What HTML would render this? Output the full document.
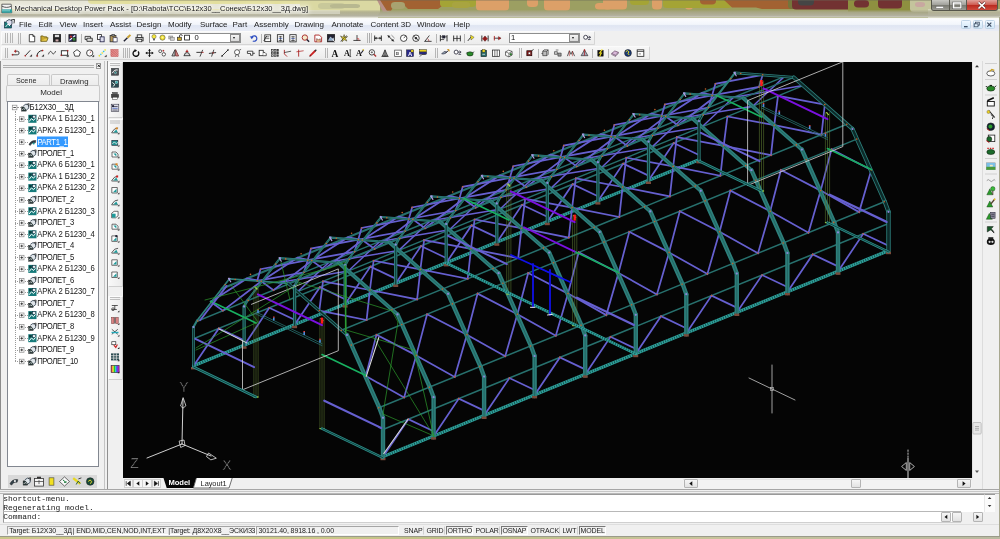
<!DOCTYPE html><html><head><meta charset="utf-8"><title>Mechanical Desktop Power Pack</title><style>
*{box-sizing:border-box;margin:0;padding:0}
html,body{width:1000px;height:539px;overflow:hidden;background:#f0f0f0}
body{position:relative;font-family:"Liberation Sans",sans-serif;font-size:8px;color:#111}
.a{position:absolute}
.t,.mi,.st,.sb,.mono{transform:translateZ(0) scaleY(1.0001)}
.t{position:absolute;white-space:nowrap;line-height:1}
#title{left:0;top:0;width:1000px;height:18px;background:#b4b48c;overflow:hidden}
#title svg{position:absolute;left:0;top:0}
#ttext{left:14.6px;top:5.2px;font-size:7.5px;color:#151515;text-shadow:0 0 2px #fff,0 0 4px #fff,0 0 6px #fff,0 0 8px #f4f4f0}
#menubar{left:1px;top:17.5px;width:998px;height:13px;background:linear-gradient(#fbfcfe,#f2f5fb 45%,#dfe5f2 55%,#e9edf6);border-top:1px solid #fafafa}
.mi{position:absolute;top:21.2px;font-size:8px;color:#1a1a1a;white-space:nowrap;line-height:1}
#tb{left:1px;top:30.5px;width:998px;height:30.5px;background:#f0f0f0}
.tbar{position:absolute;height:14px;background:linear-gradient(#f7f7f7,#ececec);border:1px solid #fbfbfb;border-right-color:#d5d5d5;border-bottom-color:#d5d5d5;border-radius:1.5px}
.grip{position:absolute;width:3px;border-left:1px solid #a8a8a8;border-right:1px solid #a8a8a8;opacity:.8}
.sep{position:absolute;width:1px;background:#b5b5b5}
.dd{position:absolute;height:10px;background:#fff;border:1px solid #8e8f8f}
.ddb{position:absolute;right:0;top:0;width:10px;height:8px;background:linear-gradient(#f4f4f4,#d9d9d9);border:1px solid #8a8a8a}
.ddb:after{content:"";position:absolute;left:2.2px;top:2.4px;border:1.8px solid transparent;border-top:2.2px solid #111}
#leftp{left:0;top:61px;width:104.5px;height:431px;background:#f0f0f0;border-left:1px solid #8c8c8c;border-right:1px solid #c4c4c4}
.tab{position:absolute;background:linear-gradient(#f4f4f4,#ebebeb);border:1px solid #c9c9c9;border-bottom:none;border-radius:2px 2px 0 0;text-align:center;font-size:8px;color:#2a2a2a}
#tree{left:7px;top:101px;width:92px;height:366px;background:#fff;border:1px solid #828790;overflow:hidden}
.ti{position:absolute;white-space:nowrap;font-size:7.7px;line-height:1;color:#151515;letter-spacing:-0.12px;transform:translateZ(0) scaleY(1.1);transform-origin:0 70%}
.ex{position:absolute;width:4.6px;height:4.6px;border:0.7px solid #777;background:#fff}
.ex:before{content:"";position:absolute;left:0.5px;right:0.5px;top:1.25px;height:0.7px;background:#222}
.ex.p:after{content:"";position:absolute;top:0.5px;bottom:0.5px;left:1.25px;width:0.7px;background:#222}
#vtb{left:107px;top:61px;width:16px;height:428px;background:#f0f0f0;border-left:1px solid #909090}
#canvas{left:123px;top:61.5px;width:849px;height:416.5px;background:#050505;overflow:hidden}
#vscroll{left:972px;top:61.5px;width:9.5px;height:416.5px;background:#f1f1f1;border-left:1px solid #e3e3e3}
#rtb{left:982px;top:61px;width:18px;height:431px;background:#f0f0f0;border-left:1px solid #dcdcdc}
#tabrow{left:123px;top:478px;width:849px;height:10.5px;background:#f0f0f0}
#cmd{left:0;top:489px;width:1000px;height:35px;background:#f0f0f0;border-top:1px solid #a6a6a6}
#cmdtxt{left:3px;top:494px;width:958px;height:17.5px;background:#fff;border-top:1px solid #9a9a9a;border-left:1px solid #9a9a9a;border-bottom:1px solid #b8b8b8}
#cmdln{left:3px;top:511.5px;width:958px;height:11px;background:#fff;border-left:1px solid #9a9a9a;border-bottom:1px solid #d0d0d0}
.mono{position:absolute;font-family:"Liberation Mono",monospace;font-size:7.95px;line-height:1;white-space:nowrap;color:#1a1a1a;left:3.2px}
#status{left:0;top:523.5px;width:1000px;height:12px;background:#f0f0f0;border-top:1px solid #dedede}
.sf{position:absolute;top:526px;height:8.6px;border:1px solid #a5a5a5;border-right-color:#fff;border-bottom-color:#fff}
.st{position:absolute;top:527.2px;font-size:7px;line-height:1;white-space:nowrap;color:#222;letter-spacing:-0.1px}
.sb{position:absolute;top:526px;height:8.8px;font-size:7px;line-height:7.4px;white-space:nowrap;color:#222;letter-spacing:-0.12px;padding:0 1px;border:1px solid transparent;border-right-color:#cfcfcf}
.sb.on{border:1px solid #777;border-right-color:#fff;border-bottom-color:#fff}
#bottomedge{left:0;top:535.5px;width:1000px;height:3.5px;background:linear-gradient(90deg,#c9c68a,#d6d08c 20%,#bdbf86 45%,#c8c49a 70%,#b9b9a0);border-top:1px solid #9a9a8a}
.sbtn{position:absolute;background:linear-gradient(#f6f6f6,#e2e2e2);border:1px solid #b4b4b4;border-radius:1px}
</style></head><body>
<div id="title" class="a"><svg width="1000" height="18" viewBox="0 0 1000 18"><defs><filter id="bl" x="-5%" y="-50%" width="110%" height="200%"><feGaussianBlur stdDeviation="0.7"/></filter><linearGradient id="fb" x1="0" y1="0" x2="0" y2="1"><stop offset="0" stop-color="#a8a888" stop-opacity="0"/><stop offset=".3" stop-color="#aaa88c" stop-opacity=".8"/><stop offset=".8" stop-color="#b4b2a0" stop-opacity="1"/><stop offset="1" stop-color="#dcdcd4" stop-opacity="1"/></linearGradient></defs><g filter="url(#bl)"><rect x="0.0" y="0.0" width="382.0" height="18.0" fill="#e6e5d6"/><rect x="378.0" y="0.0" width="622.0" height="18.0" fill="#9c9f62"/><rect x="88.0" y="-4.0" width="242.0" height="8.0" rx="4.0" ry="3.5" fill="#e2de9c"/><rect x="150.0" y="9.0" width="110.0" height="6.0" rx="4.0" ry="2.7" fill="#e6e2b0"/><rect x="10.0" y="9.0" width="60.0" height="6.0" rx="4.0" ry="2.7" fill="#e4e0a8"/><rect x="300.0" y="-3.0" width="80.0" height="18.0" rx="4.0" ry="3.5" fill="#dad8a2"/><rect x="318.0" y="3.0" width="27.0" height="6.0" rx="4.0" ry="2.7" fill="#c8c89a"/><rect x="330.0" y="4.0" width="30.0" height="4.0" rx="4.0" ry="1.8" fill="#b8b890"/><path d="M377 0h6l6 12h-6z" fill="#b89088"/><path d="M380 0h76v6h-14l-4 3h-30l-4-4h-10l-3 6h-4z" fill="#a26230"/><rect x="391.0" y="2.0" width="14.0" height="7.0" rx="4.0" ry="3.2" fill="#a8a270"/><rect x="440.0" y="-3.0" width="36.0" height="10.0" rx="4.0" ry="3.5" fill="#a4a436"/><rect x="452.0" y="2.0" width="18.0" height="6.0" rx="4.0" ry="2.7" fill="#a8a440"/><rect x="476.0" y="-4.0" width="33.0" height="14.5" rx="4.0" ry="3.5" fill="#dca068"/><rect x="527.0" y="-3.0" width="11.0" height="10.0" rx="4.0" ry="3.5" fill="#dca068"/><rect x="544.0" y="-3.0" width="26.0" height="13.5" rx="4.0" ry="3.5" fill="#dca068"/><rect x="603.0" y="-3.0" width="24.0" height="12.5" rx="4.0" ry="3.5" fill="#dca068"/><rect x="595.0" y="3.0" width="17.0" height="6.5" rx="4.0" ry="3.0" fill="#dca068"/><rect x="652.0" y="-3.0" width="10.0" height="12.5" rx="4.0" ry="3.5" fill="#dca068"/><rect x="685.0" y="1.5" width="8.0" height="8.0" rx="3.2" ry="3.5" fill="#dca068"/><rect x="630.0" y="-3.0" width="19.0" height="8.0" rx="4.0" ry="3.5" fill="#a4a436"/><rect x="663.0" y="-4.0" width="69.0" height="12.0" rx="4.0" ry="3.5" fill="#a4a436"/><rect x="700.0" y="-3.0" width="16.0" height="7.5" rx="4.0" ry="3.4" fill="#a26230"/><path d="M724 0h68v9h-30l-6-1.5h-24z" fill="#a26230"/><rect x="788.0" y="-2.0" width="12.0" height="11.0" rx="4.0" ry="3.5" fill="#74743a"/><rect x="792.0" y="-4.0" width="60.0" height="13.5" rx="4.0" ry="3.5" fill="#723232"/><rect x="798.0" y="-3.0" width="16.0" height="8.5" rx="4.0" ry="3.5" fill="#454545"/><rect x="848.0" y="0.0" width="70.0" height="12.0" fill="#8e9040"/><rect x="854.0" y="0.0" width="15.0" height="7.5" rx="4.0" ry="3.4" fill="#723232"/><rect x="878.0" y="-3.0" width="24.0" height="11.5" rx="4.0" ry="3.5" fill="#723232"/><rect x="910.0" y="-3.0" width="24.0" height="15.0" rx="4.0" ry="3.5" fill="#c4c49c"/><rect x="915.0" y="2.0" width="10.0" height="5.0" rx="4.0" ry="2.3" fill="#c8a8a0"/><rect x="928.0" y="9.0" width="72.0" height="9.0" fill="#d4d4b8"/></g><rect x="0" y="9.5" width="1000" height="8" fill="url(#fb)"/><rect x="0" y="10" width="340" height="4" fill="#e8e8dc" opacity=".55"/><rect x="0" y="0" width="1000" height="1" fill="#6a6a5a" opacity=".35"/></svg></div>
<svg class="a" style="left:1px;top:3px" width="12" height="11" viewBox="0 0 12 11"><path d="M.8 1.2h9.4l.6 8.6h-10z" fill="#f4f4f4" stroke="#333" stroke-width=".7"/><path d="M1 3.2c3 1.6 6 1.6 9.4 0" fill="none" stroke="#333" stroke-width=".8"/><rect x=".9" y="6.3" width="10" height="3.4" fill="#1a9a9a"/><path d="M2 6.5v2M4 6.5v2M6 6.5v2M8 6.5v2" stroke="#fff" stroke-width=".7"/></svg>
<div id="ttext" class="t">Mechanical Desktop Power Pack - [D:\Rabota\ТСС\Б12х30__Сонекс\Б12х30__3Д.dwg]</div>
<div class="a" style="left:931px;top:0;width:67px;height:11px;border:1px solid #55554a;border-top:none;border-radius:0 0 3px 3px;background:#888;overflow:hidden"><div class="a" style="left:0;top:0;width:17.5px;height:10px;background:linear-gradient(#c9c9c4,#a3a39e 45%,#77776f 50%,#9c9c94);border-right:1px solid #5a5a50"></div><div class="a" style="left:17.5px;top:0;width:17.5px;height:10px;background:linear-gradient(#c9c9c4,#a3a39e 45%,#77776f 50%,#9c9c94);border-right:1px solid #5a5a50"></div><div class="a" style="left:35px;top:0;width:31px;height:10px;background:linear-gradient(#e0a29a,#cf5f55 45%,#b8281e 50%,#cf4a3c)"></div></div>
<svg class="a" style="left:931px;top:0" width="67" height="11" viewBox="0 0 67 11"><rect x="5" y="6.4" width="7.5" height="2" fill="#fff" stroke="#555" stroke-width=".4"/><rect x="22.5" y="2.8" width="7.5" height="5.2" fill="none" stroke="#fff" stroke-width="1.5"/><rect x="21.7" y="2" width="9.1" height="6.8" fill="none" stroke="#555" stroke-width=".4"/><path d="M47.5 2.3l6.6 6.2M54.1 2.3l-6.6 6.2" stroke="#5a2a2a" stroke-width="2.6"/><path d="M47.5 2.3l6.6 6.2M54.1 2.3l-6.6 6.2" stroke="#fff" stroke-width="1.6"/></svg>
<div id="menubar" class="a"></div>
<svg class="a" style="left:4px;top:19px" width="12" height="10" viewBox="0 0 12 10"><rect x=".5" y="3" width="7" height="6" fill="#1a7a7a" stroke="#123" stroke-width=".6"/><path d="M2 2.5l3-2 3 1.2v3.6l-2.5 2" fill="#dde" stroke="#123" stroke-width=".7"/><path d="M7 1l3.5-.6-.5 4" fill="none" stroke="#222" stroke-width=".9"/><path d="M1.5 8l2.5-3 2 2" fill="none" stroke="#fff" stroke-width=".8"/></svg>
<div class="mi" style="left:19px">File</div>
<div class="mi" style="left:38.5px">Edit</div>
<div class="mi" style="left:59.5px">View</div>
<div class="mi" style="left:83px">Insert</div>
<div class="mi" style="left:110px">Assist</div>
<div class="mi" style="left:136.5px">Design</div>
<div class="mi" style="left:168px">Modify</div>
<div class="mi" style="left:200px">Surface</div>
<div class="mi" style="left:232.5px">Part</div>
<div class="mi" style="left:254px">Assembly</div>
<div class="mi" style="left:294.5px">Drawing</div>
<div class="mi" style="left:331.5px">Annotate</div>
<div class="mi" style="left:370.5px">Content 3D</div>
<div class="mi" style="left:417px">Window</div>
<div class="mi" style="left:453.5px">Help</div>
<div class="a" style="left:960.5px;top:19.5px;width:10.5px;height:9.5px;background:linear-gradient(#f0f8ff,#d2e8f8);border:1px solid #c0d4e6;border-radius:1.5px"></div>
<div class="a" style="left:972.5px;top:19.5px;width:10.5px;height:9.5px;background:linear-gradient(#f0f8ff,#d2e8f8);border:1px solid #c0d4e6;border-radius:1.5px"></div>
<div class="a" style="left:984.5px;top:19.5px;width:10.5px;height:9.5px;background:linear-gradient(#f0f8ff,#d2e8f8);border:1px solid #c0d4e6;border-radius:1.5px"></div>
<svg class="a" style="left:960px;top:19px" width="40" height="11" viewBox="0 0 40 11"><rect x="4" y="7" width="3.6" height="1.3" fill="#3a4a60"/><rect x="15.5" y="3.2" width="3.8" height="3" fill="none" stroke="#3a4a60" stroke-width=".8"/><rect x="14.2" y="4.8" width="3.8" height="3" fill="#e0f0fc" stroke="#3a4a60" stroke-width=".8"/><path d="M27.3 3.6l4 4M31.3 3.6l-4 4" stroke="#3a4a60" stroke-width="1.2"/></svg>
<div id="tb" class="a"></div>
<div class="tbar" style="left:1px;top:31px;width:594px"></div>
<div class="tbar" style="left:1px;top:45.5px;width:649px"></div>
<div class="grip" style="left:4.5px;top:33px;height:10px"></div>
<div class="grip" style="left:9.5px;top:33px;height:10px"></div>
<div class="grip" style="left:18px;top:33px;height:11px"></div>
<div class="grip" style="left:366.5px;top:33px;height:10px"></div>
<div class="grip" style="left:369px;top:33px;height:10px"></div>
<div class="grip" style="left:5px;top:47.5px;height:10px"></div>
<div class="grip" style="left:123px;top:47.5px;height:10px"></div>
<div class="grip" style="left:126.5px;top:47.5px;height:10px"></div>
<div class="grip" style="left:324.5px;top:47.5px;height:10px"></div>
<div class="grip" style="left:435px;top:47.5px;height:10px"></div>
<div class="grip" style="left:519px;top:47.5px;height:10px"></div>
<div class="sep" style="left:64.5px;top:34px;height:9px"></div>
<div class="sep" style="left:80.5px;top:34px;height:9px"></div>
<div class="sep" style="left:435.5px;top:34px;height:9px"></div>
<div class="sep" style="left:464px;top:34px;height:9px"></div>
<div class="sep" style="left:538px;top:48.5px;height:9px"></div>
<div class="sep" style="left:592px;top:48.5px;height:9px"></div>
<div class="sep" style="left:608px;top:48.5px;height:9px"></div>
<div class="sep" style="left:260.5px;top:34px;height:9px"></div>
<div class="dd" style="left:149px;top:33px;width:92px"><div class="ddb"></div></div>
<div class="dd" style="left:508.5px;top:33px;width:71.5px"><div class="ddb"></div></div>
<div class="t" style="left:194.5px;top:34.3px;font-size:7.6px">0</div>
<div class="t" style="left:511px;top:34.3px;font-size:7.6px">1</div>
<svg class="a" style="left:0;top:0" width="1000" height="62" viewBox="0 0 1000 62"><g transform="translate(32.0 38.2) scale(.9) translate(-32.0 -38.2)"><path transform="translate(27.5 33.7)" d="M1.5 0.5h4l2 2v6h-6z" fill="#fff" stroke="#222" stroke-width="0.9"/><path transform="translate(27.5 33.7)" d="M5.5 .5v2h2" fill="none" stroke="#222" stroke-width="0.9"/></g><g transform="translate(44.5 38.2) scale(.9) translate(-44.5 -38.2)"><path transform="translate(40.0 33.7)" d="M.5 8l1.5-4h6.5l-1.5 4z" fill="#e8c84a" stroke="#6a5a10" stroke-width="0.9"/><path transform="translate(40.0 33.7)" d="M.5 8v-6h2.5l1 1h3v1" fill="#c8a830" stroke="#6a5a10" stroke-width="0.9"/></g><g transform="translate(57.0 38.2) scale(.9) translate(-57.0 -38.2)"><rect x="53.0" y="34.2" width="8.0" height="8.0" fill="#222" stroke="#222" stroke-width="0.9"/><rect x="54.5" y="34.2" width="5.0" height="3.0" fill="#ddd" stroke="#222" stroke-width="0.5"/><rect x="55.0" y="39.2" width="4.0" height="3.0" fill="#caa" stroke="#222" stroke-width="0.5"/></g><g transform="translate(72.5 38.2) scale(.9) translate(-72.5 -38.2)"><rect x="68.5" y="34.2" width="8.0" height="7.5" fill="#2a2a6a" stroke="#222" stroke-width="0.9"/><line x1="69.0" y1="40.7" x2="75.5" y2="35.2" stroke="#fff" stroke-width="1.2"/><rect x="72.5" y="37.7" width="3.5" height="3.5" fill="#3a8a3a" stroke="#111" stroke-width="0.5"/><rect x="69.5" y="35.2" width="2.5" height="2.5" fill="#c33" stroke="#111" stroke-width="0.4"/></g><g transform="translate(88.7 38.2) scale(.9) translate(-88.7 -38.2)"><path transform="translate(84.2 33.7)" d="M.5 2.5h6v3.5h-6z" fill="#eee" stroke="#222" stroke-width="0.9"/><path transform="translate(84.2 33.7)" d="M2.5 4.5h6v3.5h-6z" fill="#ddd" stroke="#222" stroke-width="0.9"/></g><g transform="translate(101.0 38.2) scale(.9) translate(-101.0 -38.2)"><rect x="97.0" y="34.2" width="4.5" height="5.5" fill="#fff" stroke="#222" stroke-width="0.9"/><rect x="100.0" y="36.7" width="4.5" height="5.5" fill="#dde" stroke="#224" stroke-width="0.9"/></g><g transform="translate(113.7 38.2) scale(.9) translate(-113.7 -38.2)"><rect x="109.7" y="35.2" width="6.5" height="7.0" fill="#b89a58" stroke="#333" stroke-width="0.9"/><rect x="111.7" y="34.0" width="3.0" height="2.0" fill="#888" stroke="#222" stroke-width="0.6"/><rect x="113.0" y="37.7" width="4.5" height="4.6" fill="#fff" stroke="#224" stroke-width="0.7"/></g><g transform="translate(127.0 38.2) scale(.9) translate(-127.0 -38.2)"><line x1="123.5" y1="41.7" x2="127.5" y2="37.7" stroke="#223" stroke-width="1.6"/><line x1="127.5" y1="37.7" x2="130.8" y2="34.5" stroke="#c8a030" stroke-width="2.2"/></g><g transform="translate(139.5 38.2) scale(.9) translate(-139.5 -38.2)"><rect x="135.5" y="37.2" width="8.0" height="4.0" fill="#bbb" stroke="#222" stroke-width="0.9"/><rect x="137.0" y="34.5" width="5.0" height="2.8" fill="#fff" stroke="#222" stroke-width="0.9"/><rect x="137.0" y="39.7" width="5.0" height="2.5" fill="#fff" stroke="#222" stroke-width="0.7"/></g><g transform="translate(253.7 38.2) scale(.9) translate(-253.7 -38.2)"><path transform="translate(249.2 33.7)" d="M2 4.5a3 3 0 1 1 1.5 3" fill="none" stroke="#2a4ac0" stroke-width="1.3"/><path transform="translate(249.2 33.7)" d="M.5 2.5l1.8 3 2-2.6z" fill="#2a4ac0" stroke="#2a4ac0" stroke-width="0.3"/></g><g transform="translate(267.5 38.2) scale(.9) translate(-267.5 -38.2)"><rect x="264.5" y="34.5" width="6.5" height="7.5" fill="#fff" stroke="#222" stroke-width="0.9"/><line x1="266.0" y1="36.7" x2="269.5" y2="36.7" stroke="#222" stroke-width="0.7"/><line x1="266.0" y1="38.7" x2="269.5" y2="38.7" stroke="#222" stroke-width="0.7"/><line x1="263.5" y1="41.2" x2="266.5" y2="35.7" stroke="#222" stroke-width="1.1"/></g><g transform="translate(280.5 38.2) scale(.9) translate(-280.5 -38.2)"><rect x="277.0" y="34.3" width="7.0" height="8.0" fill="#fff" stroke="#222" stroke-width="0.9"/><line x1="278.5" y1="36.7" x2="282.5" y2="36.7" stroke="#222" stroke-width="0.8"/><line x1="278.5" y1="38.7" x2="282.5" y2="38.7" stroke="#24a" stroke-width="0.8"/><line x1="278.5" y1="40.7" x2="282.5" y2="40.7" stroke="#222" stroke-width="0.8"/><line x1="280.5" y1="35.7" x2="280.5" y2="41.7" stroke="#222" stroke-width="0.6"/></g><g transform="translate(293.0 38.2) scale(.9) translate(-293.0 -38.2)"><rect x="289.5" y="34.3" width="7.0" height="8.0" fill="#fff" stroke="#222" stroke-width="0.9"/><line x1="291.0" y1="36.7" x2="295.0" y2="36.7" stroke="#222" stroke-width="0.8"/><line x1="291.0" y1="38.7" x2="295.0" y2="38.7" stroke="#24a" stroke-width="0.8"/><line x1="291.0" y1="40.7" x2="295.0" y2="40.7" stroke="#222" stroke-width="0.8"/><line x1="293.0" y1="35.7" x2="293.0" y2="41.7" stroke="#222" stroke-width="0.6"/></g><g transform="translate(305.5 38.2) scale(.9) translate(-305.5 -38.2)"><circle cx="304.8" cy="37.5" r="3.0" fill="#f4e8c8" stroke="#a33" stroke-width="1.1"/><line x1="307.0" y1="39.7" x2="309.5" y2="42.2" stroke="#223" stroke-width="1.6"/></g><g transform="translate(318.0 38.2) scale(.9) translate(-318.0 -38.2)"><path transform="translate(313.5 33.7)" d="M1 1h5l2.5 2.5v5h-7.5z" fill="#fff" stroke="#a22" stroke-width="1"/><path transform="translate(313.5 33.7)" d="M3 8.5v-3.5l2 1.2 2-1v3.3" fill="#e8c090" stroke="#622" stroke-width="0.6"/></g><g transform="translate(331.0 38.2) scale(.9) translate(-331.0 -38.2)"><rect x="327.0" y="34.2" width="8.0" height="8.0" fill="#223" stroke="#222" stroke-width="0.9"/><path transform="translate(326.5 33.7)" d="M1.5 7l2.5-4 2 2.5 1.5-1.5v3z" fill="#8ac" stroke="#fff" stroke-width="0.4"/><line x1="332.5" y1="38.7" x2="335.1" y2="42.3" stroke="#fff" stroke-width="1"/></g><g transform="translate(343.7 38.2) scale(.9) translate(-343.7 -38.2)"><path transform="translate(339.2 33.7)" d="M1 2l3 1.5 1-3 .8 3 3-.8-2.3 2 1.5 3-3-1.6-2.4 2.4.6-3.2z" fill="#f0d820" stroke="#333" stroke-width="0.6"/><line x1="340.2" y1="41.7" x2="347.2" y2="35.2" stroke="#333" stroke-width="0.8"/></g><g transform="translate(357.0 38.2) scale(.9) translate(-357.0 -38.2)"><line x1="353.0" y1="40.7" x2="361.0" y2="40.7" stroke="#222" stroke-width="0.9"/><line x1="357.0" y1="34.7" x2="357.0" y2="40.7" stroke="#222" stroke-width="0.9"/><line x1="357.0" y1="38.7" x2="359.0" y2="38.7" stroke="#c33" stroke-width="0.7"/><line x1="359.0" y1="38.7" x2="359.0" y2="40.7" stroke="#c33" stroke-width="0.7"/></g><g transform="translate(378.0 38.2) scale(.9) translate(-378.0 -38.2)"><line x1="374.3" y1="35.2" x2="374.3" y2="41.2" stroke="#222" stroke-width="1"/><line x1="381.7" y1="35.2" x2="381.7" y2="41.2" stroke="#222" stroke-width="1"/><line x1="374.3" y1="38.2" x2="381.7" y2="38.2" stroke="#222" stroke-width="0.8"/><path transform="translate(373.5 33.7)" d="M.8 4.5l2-1.2v2.4z M8.2 4.5l-2-1.2v2.4z" fill="#222" stroke="#222" stroke-width="0.2"/></g><g transform="translate(391.0 38.2) scale(.9) translate(-391.0 -38.2)"><line x1="387.5" y1="35.2" x2="394.0" y2="41.7" stroke="#222" stroke-width="1"/><path transform="translate(386.5 33.7)" d="M1 1.5l2.6.6-2 2z M7.5 8l-2.6-.6 2-2z" fill="#222" stroke="#222" stroke-width="0.2"/><line x1="391.5" y1="34.7" x2="395.0" y2="38.2" stroke="#555" stroke-width="0.7"/></g><g transform="translate(403.7 38.2) scale(.9) translate(-403.7 -38.2)"><circle cx="403.7" cy="38.2" r="3.6" fill="#fff" stroke="#222" stroke-width="0.9"/><line x1="403.7" y1="38.2" x2="406.0" y2="35.7" stroke="#222" stroke-width="0.8"/></g><g transform="translate(416.0 38.2) scale(.9) translate(-416.0 -38.2)"><circle cx="416.0" cy="38.2" r="3.6" fill="#fff" stroke="#222" stroke-width="0.9"/><line x1="413.5" y1="35.9" x2="418.5" y2="40.5" stroke="#222" stroke-width="0.8"/><circle cx="416.0" cy="38.2" r="1.0" fill="#222" stroke="#222" stroke-width="0.9"/></g><g transform="translate(428.0 38.2) scale(.9) translate(-428.0 -38.2)"><path transform="translate(423.5 33.7)" d="M.5 8h8M1 8l5-6.5" fill="none" stroke="#222" stroke-width="0.9"/><path transform="translate(423.5 33.7)" d="M5.5 8a4 4 0 0 0-1.6-3.2" fill="none" stroke="#a33" stroke-width="0.8"/></g><g transform="translate(443.7 38.2) scale(.9) translate(-443.7 -38.2)"><line x1="440.0" y1="34.7" x2="440.0" y2="41.7" stroke="#222" stroke-width="1"/><line x1="447.4" y1="34.7" x2="447.4" y2="41.7" stroke="#222" stroke-width="1"/><line x1="440.0" y1="36.7" x2="447.4" y2="36.7" stroke="#222" stroke-width="0.8"/><line x1="440.0" y1="39.7" x2="444.2" y2="39.7" stroke="#222" stroke-width="0.8"/><rect x="442.2" y="35.2" width="3.0" height="3.0" fill="#223" stroke="#223" stroke-width="0.3"/></g><g transform="translate(457.0 38.2) scale(.9) translate(-457.0 -38.2)"><line x1="453.3" y1="35.2" x2="453.3" y2="41.7" stroke="#222" stroke-width="1"/><line x1="457.0" y1="35.2" x2="457.0" y2="41.7" stroke="#222" stroke-width="1"/><line x1="460.7" y1="35.2" x2="460.7" y2="41.7" stroke="#222" stroke-width="1"/><line x1="453.3" y1="38.5" x2="460.7" y2="38.5" stroke="#222" stroke-width="0.8"/></g><g transform="translate(471.0 38.2) scale(.9) translate(-471.0 -38.2)"><line x1="467.5" y1="41.2" x2="471.5" y2="36.2" stroke="#222" stroke-width="1"/><path transform="translate(466.5 33.7)" d="M4 1l4 2.5-3.5 3z" fill="#f0e020" stroke="#444" stroke-width="0.5"/></g><g transform="translate(485.0 38.2) scale(.9) translate(-485.0 -38.2)"><line x1="481.5" y1="35.2" x2="481.5" y2="41.7" stroke="#222" stroke-width="1"/><line x1="488.5" y1="35.2" x2="488.5" y2="41.7" stroke="#222" stroke-width="1"/><path transform="translate(480.5 33.7)" d="M1.5 5l3-3v6z M7.5 5l-3-3v6z" fill="#a22" stroke="#311" stroke-width="0.3"/></g><g transform="translate(497.5 38.2) scale(.9) translate(-497.5 -38.2)"><line x1="493.5" y1="38.2" x2="501.0" y2="38.2" stroke="#222" stroke-width="0.9"/><path transform="translate(493.0 33.7)" d="M8.5 4.5l-3-2v4z" fill="#a22" stroke="#511" stroke-width="0.3"/><line x1="494.0" y1="35.7" x2="494.0" y2="40.7" stroke="#a22" stroke-width="1"/></g><g transform="translate(587.0 38.2) scale(.9) translate(-587.0 -38.2)"><circle cx="585.5" cy="37.2" r="2.2" fill="#fff" stroke="#223" stroke-width="0.9"/><line x1="587.5" y1="37.2" x2="591.0" y2="37.2" stroke="#223" stroke-width="0.8"/><line x1="588.0" y1="39.7" x2="591.0" y2="39.7" stroke="#223" stroke-width="0.8"/><path transform="translate(582.5 33.7)" d="M6.5 2l2 1.5-2 1.5" fill="none" stroke="#223" stroke-width="0.7"/></g><circle cx="154" cy="36.6" r="2.1" fill="#f6e83c" stroke="#554" stroke-width=".5"/><rect x="153.1" y="38.6" width="1.8" height="1.8" fill="#555"/><circle cx="162.5" cy="37.6" r="2.6" fill="#f0e030" stroke="#554" stroke-width=".6"/><circle cx="162.5" cy="37.6" r="1" fill="#fff8a0"/><rect x="168.8" y="36" width="4" height="3" fill="#bbb" stroke="#777" stroke-width=".5"/><rect x="170.3" y="37.3" width="4" height="3" fill="#ccc" stroke="#777" stroke-width=".5"/><rect x="177.3" y="37.2" width="4.2" height="3.2" fill="#c8a830" stroke="#222" stroke-width=".6"/><path d="M179.5 37.2v-1.2a1.4 1.4 0 0 1 2.8 0" fill="none" stroke="#222" stroke-width=".8"/><rect x="184.6" y="35.2" width="4.8" height="4.8" fill="#fff" stroke="#111" stroke-width=".8"/><g transform="translate(15.5 53.0) scale(.9) translate(-15.5 -53.0)"><path transform="translate(11.0 48.5)" d="M1 6.5h5.5a2 2 0 0 0 0-4h-2" fill="none" stroke="#333" stroke-width="1"/><path transform="translate(11.0 48.5)" d="M5 1l-2.2 1.5 2.2 1.6z" fill="#a22" stroke="#a22" stroke-width="0.3"/><circle cx="12.2" cy="55.0" r="0.9" fill="#a22" stroke="#a22" stroke-width="0.2"/></g><g transform="translate(28.0 53.0) scale(.9) translate(-28.0 -53.0)"><line x1="25.0" y1="56.0" x2="30.5" y2="50.0" stroke="#222" stroke-width="1"/><path transform="translate(23.5 48.5)" d="M6.5 8.5h2.3v-2.3z" fill="#222" stroke="#222" stroke-width="0.2"/><circle cx="25.0" cy="56.0" r="0.8" fill="#a22" stroke="#a22" stroke-width="0.2"/></g><g transform="translate(40.0 53.0) scale(.9) translate(-40.0 -53.0)"><path transform="translate(35.5 48.5)" d="M1.2 8a6 6 0 0 1 6-6.2" fill="none" stroke="#222" stroke-width="1.1"/><path transform="translate(35.5 48.5)" d="M6.5 8.5h2.3v-2.3z" fill="#222" stroke="#222" stroke-width="0.2"/><circle cx="36.9" cy="56.3" r="0.9" fill="#a22" stroke="#a22" stroke-width="0.2"/><circle cx="42.9" cy="50.3" r="0.8" fill="#a22" stroke="#a22" stroke-width="0.2"/></g><g transform="translate(52.0 53.0) scale(.9) translate(-52.0 -53.0)"><path transform="translate(47.5 48.5)" d="M.5 6c1.5-4 3-4 4-1.8s2.5 1.6 4-1.8" fill="none" stroke="#222" stroke-width="0.9"/></g><g transform="translate(64.5 53.0) scale(.9) translate(-64.5 -53.0)"><rect x="61.0" y="50.5" width="7.0" height="5.0" fill="#fff" stroke="#222" stroke-width="1"/><circle cx="61.0" cy="55.5" r="0.8" fill="#a22" stroke="#a22" stroke-width="0.2"/><circle cx="68.0" cy="50.5" r="0.8" fill="#a22" stroke="#a22" stroke-width="0.2"/><path transform="translate(60.0 48.5)" d="M6.8 8.8h2.2v-2.2z" fill="#222" stroke="#222" stroke-width="0.2"/></g><g transform="translate(77.0 53.0) scale(.9) translate(-77.0 -53.0)"><path transform="translate(72.5 48.5)" d="M4.5 .8l3.8 2.8-1.4 4.4h-4.8l-1.4-4.4z" fill="#fff" stroke="#222" stroke-width="0.9"/></g><g transform="translate(90.0 53.0) scale(.9) translate(-90.0 -53.0)"><circle cx="89.7" cy="53.0" r="3.5" fill="#fff" stroke="#222" stroke-width="0.9"/><line x1="89.7" y1="53.0" x2="91.5" y2="51.3" stroke="#a22" stroke-width="0.8"/><path transform="translate(85.5 48.5)" d="M6.8 8.8h2.2v-2.2z" fill="#222" stroke="#222" stroke-width="0.2"/></g><g transform="translate(102.5 53.0) scale(.9) translate(-102.5 -53.0)"><circle cx="99.0" cy="56.1" r="0.8" fill="#e8e020" stroke="#e8e020" stroke-width="0.2"/><circle cx="100.6" cy="54.5" r="0.8" fill="#30c0e0" stroke="#30c0e0" stroke-width="0.2"/><circle cx="102.2" cy="52.9" r="0.8" fill="#e8e020" stroke="#e8e020" stroke-width="0.2"/><circle cx="103.8" cy="51.3" r="0.8" fill="#30c0e0" stroke="#30c0e0" stroke-width="0.2"/><circle cx="105.4" cy="49.7" r="0.8" fill="#e8e020" stroke="#e8e020" stroke-width="0.2"/><path transform="translate(98.0 48.5)" d="M6.8 8.8h2.2v-2.2z" fill="#222" stroke="#222" stroke-width="0.2"/></g><g transform="translate(114.5 53.0) scale(.9) translate(-114.5 -53.0)"><rect x="110.5" y="49.0" width="8.0" height="8.0" fill="#e8a0a0" stroke="#c06060" stroke-width="0.5"/><line x1="110.5" y1="54.5" x2="112.0" y2="57.0" stroke="#c04040" stroke-width="0.6"/><line x1="110.5" y1="52.5" x2="114.0" y2="57.0" stroke="#c04040" stroke-width="0.6"/><line x1="110.5" y1="50.5" x2="116.0" y2="57.0" stroke="#c04040" stroke-width="0.6"/><line x1="110.5" y1="49.0" x2="118.0" y2="57.0" stroke="#c04040" stroke-width="0.6"/><line x1="112.0" y1="49.0" x2="118.5" y2="55.5" stroke="#c04040" stroke-width="0.6"/><line x1="114.0" y1="49.0" x2="118.5" y2="53.5" stroke="#c04040" stroke-width="0.6"/><line x1="116.0" y1="49.0" x2="118.5" y2="51.5" stroke="#c04040" stroke-width="0.6"/><line x1="118.0" y1="49.0" x2="118.5" y2="49.5" stroke="#c04040" stroke-width="0.6"/></g><g transform="translate(136.0 53.0) scale(.9) translate(-136.0 -53.0)"><path transform="translate(131.5 48.5)" d="M6.8 2.8a3.2 3.2 0 1 1-3-1" fill="none" stroke="#111" stroke-width="1.5"/><path transform="translate(131.5 48.5)" d="M3 .2l2.6 1.6-2.6 1.6z" fill="#111" stroke="#111" stroke-width="0.2"/></g><g transform="translate(149.5 53.0) scale(.9) translate(-149.5 -53.0)"><line x1="149.5" y1="49.0" x2="149.5" y2="57.0" stroke="#111" stroke-width="1"/><line x1="145.5" y1="53.0" x2="153.5" y2="53.0" stroke="#111" stroke-width="1"/><path transform="translate(145.0 48.5)" d="M4.5 0l-1.5 2h3z M4.5 9l-1.5-2h3z M0 4.5l2-1.5v3z M9 4.5l-2-1.5v3z" fill="#111" stroke="#111" stroke-width="0.1"/></g><g transform="translate(162.0 53.0) scale(.9) translate(-162.0 -53.0)"><circle cx="160.0" cy="51.0" r="1.6" fill="#fff" stroke="#222" stroke-width="0.8"/><circle cx="164.0" cy="54.5" r="1.9" fill="#fff" stroke="#222" stroke-width="0.8"/><circle cx="163.5" cy="50.5" r="0.9" fill="#a22" stroke="#a22" stroke-width="0.2"/></g><g transform="translate(175.0 53.0) scale(.9) translate(-175.0 -53.0)"><path transform="translate(170.5 48.5)" d="M4.5 .8l-3.5 7h3.5z" fill="#bbb" stroke="#222" stroke-width="0.8"/><path transform="translate(170.5 48.5)" d="M5.2 .8l3.3 7h-3.3z" fill="#d88" stroke="#622" stroke-width="0.8"/></g><g transform="translate(187.0 53.0) scale(.9) translate(-187.0 -53.0)"><path transform="translate(182.5 48.5)" d="M.8 7.5h7.6M1.5 7.5a3 3.5 0 0 1 6 0" fill="#ddd" stroke="#222" stroke-width="0.9"/><path transform="translate(182.5 48.5)" d="M3 3.4l1.5-2.6 1.5 2.6z" fill="#a22" stroke="#a22" stroke-width="0.3"/></g><g transform="translate(200.0 53.0) scale(.9) translate(-200.0 -53.0)"><line x1="196.0" y1="52.3" x2="201.0" y2="52.3" stroke="#222" stroke-width="1"/><line x1="201.0" y1="52.3" x2="204.0" y2="52.3" stroke="#a22" stroke-width="1"/><line x1="203.0" y1="49.5" x2="200.0" y2="57.0" stroke="#222" stroke-width="0.9"/></g><g transform="translate(212.5 53.0) scale(.9) translate(-212.5 -53.0)"><line x1="208.5" y1="53.5" x2="216.5" y2="52.5" stroke="#222" stroke-width="1"/><line x1="214.0" y1="49.3" x2="211.5" y2="57.0" stroke="#222" stroke-width="0.9"/><line x1="212.5" y1="53.0" x2="214.0" y2="52.8" stroke="#a22" stroke-width="1.2"/></g><g transform="translate(225.0 53.0) scale(.9) translate(-225.0 -53.0)"><line x1="221.5" y1="56.5" x2="228.5" y2="49.5" stroke="#222" stroke-width="1"/><circle cx="221.7" cy="56.3" r="0.8" fill="#222" stroke="#222" stroke-width="0.2"/><circle cx="228.3" cy="49.7" r="0.8" fill="#222" stroke="#222" stroke-width="0.2"/></g><g transform="translate(237.5 53.0) scale(.9) translate(-237.5 -53.0)"><circle cx="237.0" cy="52.1" r="2.8" fill="#fff" stroke="#222" stroke-width="0.8"/><line x1="236.0" y1="55.0" x2="235.0" y2="57.3" stroke="#222" stroke-width="0.8"/><line x1="238.0" y1="55.0" x2="239.0" y2="57.3" stroke="#222" stroke-width="0.8"/><line x1="239.5" y1="49.7" x2="241.5" y2="49.0" stroke="#222" stroke-width="0.7"/></g><g transform="translate(251.0 53.0) scale(.9) translate(-251.0 -53.0)"><path transform="translate(246.5 48.5)" d="M.5 2.5h6v4.5h-2.5v-2h-3.5z" fill="#fff" stroke="#222" stroke-width="0.9"/><path transform="translate(246.5 48.5)" d="M6.5 4.8h2.3" fill="none" stroke="#222" stroke-width="0.9"/></g><g transform="translate(262.5 53.0) scale(.9) translate(-262.5 -53.0)"><rect x="258.8" y="50.0" width="4.5" height="6.0" fill="#fff" stroke="#222" stroke-width="0.9"/><path transform="translate(258.0 48.5)" d="M5.3 4h2l1.4 1.4v2.1h-3.4" fill="#fff" stroke="#222" stroke-width="0.8"/></g><g transform="translate(275.0 53.0) scale(.9) translate(-275.0 -53.0)"><rect x="271.1" y="49.1" width="1.9" height="1.9" fill="#fff" stroke="#222" stroke-width="0.7"/><rect x="271.1" y="52.1" width="1.9" height="1.9" fill="#fff" stroke="#222" stroke-width="0.7"/><rect x="271.1" y="55.1" width="1.9" height="1.9" fill="#fff" stroke="#222" stroke-width="0.7"/><rect x="274.1" y="49.1" width="1.9" height="1.9" fill="#fff" stroke="#222" stroke-width="0.7"/><rect x="274.1" y="52.1" width="1.9" height="1.9" fill="#fff" stroke="#222" stroke-width="0.7"/><rect x="274.1" y="55.1" width="1.9" height="1.9" fill="#fff" stroke="#222" stroke-width="0.7"/><rect x="277.1" y="49.1" width="1.9" height="1.9" fill="#fff" stroke="#222" stroke-width="0.7"/><rect x="277.1" y="52.1" width="1.9" height="1.9" fill="#fff" stroke="#222" stroke-width="0.7"/><rect x="277.1" y="55.1" width="1.9" height="1.9" fill="#fff" stroke="#222" stroke-width="0.7"/></g><g transform="translate(287.5 53.0) scale(.9) translate(-287.5 -53.0)"><path transform="translate(283.0 48.5)" d="M1 1v4.5l3 3" fill="none" stroke="#a22" stroke-width="1"/><line x1="284.0" y1="52.5" x2="291.5" y2="51.0" stroke="#222" stroke-width="0.8"/></g><g transform="translate(300.0 53.0) scale(.9) translate(-300.0 -53.0)"><path transform="translate(295.5 48.5)" d="M3 .8v7.7" fill="none" stroke="#a22" stroke-width="1"/><line x1="296.0" y1="51.7" x2="304.0" y2="50.5" stroke="#a22" stroke-width="0.8"/></g><g transform="translate(313.0 53.0) scale(.9) translate(-313.0 -53.0)"><line x1="309.5" y1="56.5" x2="315.5" y2="50.5" stroke="#c22" stroke-width="2"/><line x1="315.0" y1="51.0" x2="316.7" y2="49.3" stroke="#333" stroke-width="1.6"/><line x1="309.3" y1="56.9" x2="310.3" y2="55.7" stroke="#222" stroke-width="1"/></g><g transform="translate(335.0 53.0) scale(.9) translate(-335.0 -53.0)"><text x="331.1" y="57.1" font-family="Liberation Serif,serif" font-weight="700" font-size="10.5" fill="#111">A</text></g><g transform="translate(348.0 53.0) scale(.9) translate(-348.0 -53.0)"><text x="343.5" y="56.7" font-family="Liberation Serif,serif" font-weight="700" font-size="9" fill="#111">A</text><line x1="350.5" y1="49.5" x2="350.5" y2="57.0" stroke="#222" stroke-width="0.8"/><line x1="349.5" y1="49.5" x2="351.5" y2="49.5" stroke="#222" stroke-width="0.7"/><line x1="349.5" y1="57.0" x2="351.5" y2="57.0" stroke="#222" stroke-width="0.7"/></g><g transform="translate(360.0 53.0) scale(.9) translate(-360.0 -53.0)"><text x="355.5" y="56.7" font-family="Liberation Serif,serif" font-weight="700" font-size="9" fill="#111">A</text><line x1="361.0" y1="53.5" x2="364.0" y2="49.5" stroke="#223" stroke-width="1.2"/><path transform="translate(355.5 48.5)" d="M7.5 .5l1.2 1.2" fill="none" stroke="#e0c020" stroke-width="1.2"/></g><g transform="translate(372.5 53.0) scale(.9) translate(-372.5 -53.0)"><circle cx="371.8" cy="52.3" r="3.0" fill="#fff" stroke="#333" stroke-width="1"/><line x1="374.0" y1="54.5" x2="376.5" y2="57.0" stroke="#a33" stroke-width="1.5"/><line x1="370.5" y1="52.3" x2="373.0" y2="52.3" stroke="#333" stroke-width="0.7"/><line x1="371.8" y1="51.0" x2="371.8" y2="53.5" stroke="#333" stroke-width="0.7"/></g><g transform="translate(385.0 53.0) scale(.9) translate(-385.0 -53.0)"><path transform="translate(380.5 48.5)" d="M4.5 1l-3 7h6z" fill="#999" stroke="#222" stroke-width="0.8"/><line x1="385.0" y1="49.5" x2="385.0" y2="57.0" stroke="#222" stroke-width="0.6"/><line x1="381.0" y1="56.8" x2="389.0" y2="56.8" stroke="#222" stroke-width="0.8"/></g><g transform="translate(398.0 53.0) scale(.9) translate(-398.0 -53.0)"><rect x="394.3" y="49.8" width="7.4" height="7.0" fill="#fff" stroke="#444" stroke-width="0.8"/><rect x="396.0" y="52.5" width="2.5" height="2.5" fill="#bbb" stroke="#444" stroke-width="0.5"/></g><g transform="translate(410.0 53.0) scale(.9) translate(-410.0 -53.0)"><rect x="406.0" y="49.5" width="8.0" height="7.5" fill="#2a2a8a" stroke="#222" stroke-width="0.5"/><text x="407.7" y="56.1" font-family="Liberation Sans,sans-serif" font-weight="700" font-size="6.5" fill="#fff">A</text><rect x="411.0" y="49.5" width="3.0" height="2.5" fill="#e8d020" stroke="#222" stroke-width="0.4"/></g><g transform="translate(423.0 53.0) scale(.9) translate(-423.0 -53.0)"><rect x="419.0" y="49.3" width="8.0" height="2.6" fill="#e8d020" stroke="#222" stroke-width="0.5"/><rect x="419.0" y="51.9" width="8.0" height="2.4" fill="#2a2a8a" stroke="#222" stroke-width="0.5"/><path transform="translate(418.5 48.5)" d="M1 8.5l2.5-2.5h4" fill="none" stroke="#222" stroke-width="0.8"/></g><g transform="translate(445.0 53.0) scale(.9) translate(-445.0 -53.0)"><path transform="translate(440.5 48.5)" d="M.8 5.5l2.5-2.5h3l-2.5 2.5z" fill="#9ab" stroke="#223" stroke-width="0.7"/><path transform="translate(440.5 48.5)" d="M5 5l3.5-3.5" fill="none" stroke="#223" stroke-width="1"/><path transform="translate(440.5 48.5)" d="M7 .8h2v2" fill="none" stroke="#c80" stroke-width="1"/></g><g transform="translate(457.5 53.0) scale(.9) translate(-457.5 -53.0)"><circle cx="456.0" cy="52.0" r="2.2" fill="#fff" stroke="#223" stroke-width="0.9"/><line x1="458.0" y1="52.0" x2="461.5" y2="52.0" stroke="#223" stroke-width="0.8"/><line x1="458.5" y1="54.5" x2="461.5" y2="54.5" stroke="#223" stroke-width="0.8"/><path transform="translate(453.0 48.5)" d="M6.5 2l2 1.5-2 1.5" fill="none" stroke="#223" stroke-width="0.7"/></g><g transform="translate(470.0 53.0) scale(.9) translate(-470.0 -53.0)"><path transform="translate(465.5 48.5)" d="M1 5.5a3.5 2.3 0 0 0 7 0a3.5 2.3 0 0 0-7 0z" fill="#2a8a2a" stroke="#121" stroke-width="0.6"/><line x1="466.0" y1="53.5" x2="467.0" y2="52.0" stroke="#121" stroke-width="0.8"/><path transform="translate(465.5 48.5)" d="M7.5 4.5l1.3-1.5" fill="none" stroke="#121" stroke-width="0.9"/></g><g transform="translate(483.7 53.0) scale(.9) translate(-483.7 -53.0)"><rect x="480.7" y="50.0" width="6.0" height="7.0" fill="#2a6a6a" stroke="#122" stroke-width="0.7"/><rect x="482.0" y="49.1" width="3.2" height="3.0" fill="#e8d020" stroke="#222" stroke-width="0.4"/><line x1="482.2" y1="54.5" x2="485.2" y2="54.5" stroke="#fff" stroke-width="0.7"/></g><g transform="translate(496.0 53.0) scale(.9) translate(-496.0 -53.0)"><rect x="492.1" y="49.7" width="7.8" height="7.0" fill="#fff" stroke="#222" stroke-width="0.8"/><line x1="494.7" y1="49.7" x2="494.7" y2="56.7" stroke="#222" stroke-width="0.7"/><line x1="497.3" y1="49.7" x2="497.3" y2="56.7" stroke="#222" stroke-width="0.7"/></g><g transform="translate(508.7 53.0) scale(.9) translate(-508.7 -53.0)"><path transform="translate(504.2 48.5)" d="M1 3.2l3.5-1.8 3.8 1.4v4l-3.6 2-3.7-1.6z" fill="#fff" stroke="#222" stroke-width="0.7"/><path transform="translate(504.2 48.5)" d="M1 3.2l3.7 1.6 3.6-2M4.7 4.8v4" fill="none" stroke="#222" stroke-width="0.6"/><circle cx="511.0" cy="54.5" r="1.2" fill="#2a8a2a" stroke="#121" stroke-width="0.3"/></g><g transform="translate(530.0 53.0) scale(.9) translate(-530.0 -53.0)"><rect x="526.5" y="50.5" width="5.5" height="5.5" fill="#8a1a1a" stroke="#200" stroke-width="0.8"/><rect x="528.0" y="52.0" width="2.5" height="2.5" fill="#fff" stroke="#200" stroke-width="0.4"/><line x1="532.0" y1="50.5" x2="534.0" y2="49.0" stroke="#222" stroke-width="0.9"/></g><g transform="translate(545.0 53.0) scale(.9) translate(-545.0 -53.0)"><path transform="translate(540.5 48.5)" d="M2 2.5h4.5v5h-4.5z" fill="#bbb" stroke="#222" stroke-width="0.7"/><path transform="translate(540.5 48.5)" d="M2 2.5l1.5-1.5h4.5l-1.5 1.5M8 1v5l-1.5 1.5" fill="none" stroke="#222" stroke-width="0.7"/><line x1="541.0" y1="53.5" x2="542.5" y2="53.5" stroke="#222" stroke-width="0.7"/></g><g transform="translate(558.0 53.0) scale(.9) translate(-558.0 -53.0)"><path transform="translate(553.5 48.5)" d="M.6 3h3.2v3h-3.2z" fill="#ccc" stroke="#222" stroke-width="0.6"/><path transform="translate(553.5 48.5)" d="M4.4 4.6h3.6v3.4h-3.6z" fill="#999" stroke="#222" stroke-width="0.6"/><path transform="translate(553.5 48.5)" d="M2 1.2h3" fill="none" stroke="#222" stroke-width="0.6"/></g><g transform="translate(571.0 53.0) scale(.9) translate(-571.0 -53.0)"><path transform="translate(566.5 48.5)" d="M.5 8l2.2-6 1.8 4 1.6-3.5 2.4 5.5" fill="none" stroke="#222" stroke-width="0.8"/><line x1="569.2" y1="50.5" x2="569.2" y2="56.5" stroke="#a22" stroke-width="0.6"/><line x1="572.6" y1="51.0" x2="572.6" y2="56.5" stroke="#a22" stroke-width="0.6"/></g><g transform="translate(584.5 53.0) scale(.9) translate(-584.5 -53.0)"><path transform="translate(580.0 48.5)" d="M4.5 1l-3.8 6.5h7.6z" fill="#aab" stroke="#222" stroke-width="0.7"/><line x1="584.5" y1="49.5" x2="584.5" y2="56.0" stroke="#a22" stroke-width="0.8"/><path transform="translate(580.0 48.5)" d="M4.5 0l-1 1.6h2z" fill="#a22" stroke="#a22" stroke-width="0.2"/></g><g transform="translate(600.5 53.0) scale(.9) translate(-600.5 -53.0)"><rect x="597.5" y="50.0" width="6.0" height="6.5" fill="#111" stroke="#111" stroke-width="0.5"/><path transform="translate(596.0 48.5)" d="M6.5 .5l-3 4h2l-2 4" fill="none" stroke="#f0e020" stroke-width="1.2"/></g><g transform="translate(615.0 53.0) scale(.9) translate(-615.0 -53.0)"><path transform="translate(610.5 48.5)" d="M.8 5l3.5-2.8 4 1.6-3.4 3.2z" fill="#d8b8d8" stroke="#535" stroke-width="0.7"/><path transform="translate(610.5 48.5)" d="M.8 5v1.2l4.1 2v-1.2M4.9 8.2l3.4-3.2v-1.2" fill="none" stroke="#535" stroke-width="0.6"/></g><g transform="translate(628.0 53.0) scale(.9) translate(-628.0 -53.0)"><circle cx="628.0" cy="53.0" r="3.8" fill="#1a3a7a" stroke="#111" stroke-width="0.6"/><path transform="translate(623.5 48.5)" d="M2 3l2-1.2 1.5 1.5-1 2 1.5 1.5" fill="none" stroke="#e8e020" stroke-width="1.1"/></g><g transform="translate(640.5 53.0) scale(.9) translate(-640.5 -53.0)"><rect x="636.8" y="49.5" width="7.4" height="7.2" fill="#fff" stroke="#222" stroke-width="0.9"/><line x1="636.8" y1="51.3" x2="644.2" y2="51.3" stroke="#222" stroke-width="0.8"/><line x1="638.5" y1="54.0" x2="641.0" y2="54.0" stroke="#222" stroke-width="0.6"/></g></svg>
<div id="leftp" class="a"></div>
<div class="a" style="left:3px;top:64.8px;width:91px;height:1px;background:#b0b0b0"></div>
<div class="a" style="left:3px;top:66.8px;width:91px;height:1px;background:#b0b0b0"></div>
<div class="a" style="left:96px;top:63.3px;width:5.4px;height:5.4px;border:1px solid #999;background:#f4f4f4"></div>
<svg class="a" style="left:96px;top:63.3px" width="6" height="6" viewBox="0 0 6 6"><path d="M1.7 1.7l2.2 2.2M3.9 1.7l-2.2 2.2" stroke="#111" stroke-width=".9"/></svg>
<div class="tab" style="left:7px;top:74px;width:42.5px;height:11.5px"></div>
<div class="tab" style="left:50.5px;top:74px;width:48px;height:11.5px"></div>
<div class="tab" style="left:5.5px;top:85.2px;width:94.5px;height:16.5px;background:#f2f2f2;border-bottom:none"></div>
<div class="t" style="left:15.9px;top:77.2px;font-size:7.25px;color:#2a2a2a">Scene</div>
<div class="t" style="left:59.9px;top:77.5px;font-size:7.8px;color:#2a2a2a">Drawing</div>
<div class="t" style="left:40.2px;top:89.4px;font-size:8px;color:#2a2a2a">Model</div>
<div id="tree" class="a"></div>
<div class="a" style="left:14.8px;top:110.5px;width:0;height:250.99px;border-left:1px dotted #9a9a9a"></div>
<div class="a" style="left:17px;top:107.3px;width:4px;height:0;border-top:1px dotted #9a9a9a"></div>
<div class="ti" style="left:29.6px;top:103.6px">Б12Х30__3Д</div>
<div class="a" style="left:15px;top:118.8px;width:13px;height:0;border-top:1px dotted #9a9a9a"></div>
<div class="ti" style="left:37.2px;top:115.1px">АРКА 1 Б1230_1</div>
<div class="a" style="left:15px;top:130.4px;width:13px;height:0;border-top:1px dotted #9a9a9a"></div>
<div class="ti" style="left:37.2px;top:126.7px">АРКА 2 Б1230_1</div>
<div class="a" style="left:15px;top:141.9px;width:13px;height:0;border-top:1px dotted #9a9a9a"></div>
<div class="ti" style="left:36.9px;top:138.2px;background:#3399ff;color:#fff;padding:1.5px .3px 1.1px .5px;margin-top:-1.5px;letter-spacing:-0.38px">PART1_1</div>
<div class="a" style="left:15px;top:153.5px;width:13px;height:0;border-top:1px dotted #9a9a9a"></div>
<div class="ti" style="left:37.2px;top:149.8px;letter-spacing:-0.4px">ПРОЛЕТ_1</div>
<div class="a" style="left:15px;top:165.0px;width:13px;height:0;border-top:1px dotted #9a9a9a"></div>
<div class="ti" style="left:37.2px;top:161.3px">АРКА 6 Б1230_1</div>
<div class="a" style="left:15px;top:176.6px;width:13px;height:0;border-top:1px dotted #9a9a9a"></div>
<div class="ti" style="left:37.2px;top:172.9px">АРКА 1 Б1230_2</div>
<div class="a" style="left:15px;top:188.1px;width:13px;height:0;border-top:1px dotted #9a9a9a"></div>
<div class="ti" style="left:37.2px;top:184.4px">АРКА 2 Б1230_2</div>
<div class="a" style="left:15px;top:199.7px;width:13px;height:0;border-top:1px dotted #9a9a9a"></div>
<div class="ti" style="left:37.2px;top:196.0px;letter-spacing:-0.4px">ПРОЛЕТ_2</div>
<div class="a" style="left:15px;top:211.2px;width:13px;height:0;border-top:1px dotted #9a9a9a"></div>
<div class="ti" style="left:37.2px;top:207.5px">АРКА 2 Б1230_3</div>
<div class="a" style="left:15px;top:222.8px;width:13px;height:0;border-top:1px dotted #9a9a9a"></div>
<div class="ti" style="left:37.2px;top:219.0px;letter-spacing:-0.4px">ПРОЛЕТ_3</div>
<div class="a" style="left:15px;top:234.3px;width:13px;height:0;border-top:1px dotted #9a9a9a"></div>
<div class="ti" style="left:37.2px;top:230.6px">АРКА 2 Б1230_4</div>
<div class="a" style="left:15px;top:245.8px;width:13px;height:0;border-top:1px dotted #9a9a9a"></div>
<div class="ti" style="left:37.2px;top:242.1px;letter-spacing:-0.4px">ПРОЛЕТ_4</div>
<div class="a" style="left:15px;top:257.4px;width:13px;height:0;border-top:1px dotted #9a9a9a"></div>
<div class="ti" style="left:37.2px;top:253.7px;letter-spacing:-0.4px">ПРОЛЕТ_5</div>
<div class="a" style="left:15px;top:268.9px;width:13px;height:0;border-top:1px dotted #9a9a9a"></div>
<div class="ti" style="left:37.2px;top:265.2px">АРКА 2 Б1230_6</div>
<div class="a" style="left:15px;top:280.5px;width:13px;height:0;border-top:1px dotted #9a9a9a"></div>
<div class="ti" style="left:37.2px;top:276.8px;letter-spacing:-0.4px">ПРОЛЕТ_6</div>
<div class="a" style="left:15px;top:292.0px;width:13px;height:0;border-top:1px dotted #9a9a9a"></div>
<div class="ti" style="left:37.2px;top:288.3px">АРКА 2 Б1230_7</div>
<div class="a" style="left:15px;top:303.6px;width:13px;height:0;border-top:1px dotted #9a9a9a"></div>
<div class="ti" style="left:37.2px;top:299.9px;letter-spacing:-0.4px">ПРОЛЕТ_7</div>
<div class="a" style="left:15px;top:315.1px;width:13px;height:0;border-top:1px dotted #9a9a9a"></div>
<div class="ti" style="left:37.2px;top:311.4px">АРКА 2 Б1230_8</div>
<div class="a" style="left:15px;top:326.7px;width:13px;height:0;border-top:1px dotted #9a9a9a"></div>
<div class="ti" style="left:37.2px;top:323.0px;letter-spacing:-0.4px">ПРОЛЕТ_8</div>
<div class="a" style="left:15px;top:338.2px;width:13px;height:0;border-top:1px dotted #9a9a9a"></div>
<div class="ti" style="left:37.2px;top:334.5px">АРКА 2 Б1230_9</div>
<div class="a" style="left:15px;top:349.7px;width:13px;height:0;border-top:1px dotted #9a9a9a"></div>
<div class="ti" style="left:37.2px;top:346.0px;letter-spacing:-0.4px">ПРОЛЕТ_9</div>
<div class="a" style="left:15px;top:361.3px;width:13px;height:0;border-top:1px dotted #9a9a9a"></div>
<div class="ti" style="left:37.2px;top:357.6px;letter-spacing:-0.4px">ПРОЛЕТ_10</div>
<svg class="a" style="left:0;top:0" width="106" height="492" viewBox="0 0 106 492"><rect x="12.30" y="105.20" width="4.6" height="4.6" fill="#fff" stroke="#8a8a8a" stroke-width=".7"/><path d="M13.30 107.50 h2.6" stroke="#222" stroke-width=".8"/><rect x="21.6" y="106.9" width="4.6" height="4.2" fill="#2a3a3a" stroke="#111" stroke-width=".4"/><path d="M23.3 105.9 l2.6 -1.8 l2.8 1 v3.2 l-2.2 1.6" fill="#dfe5ea" stroke="#123" stroke-width=".7"/><path d="M26.7 104.3 l2.4 -.6 l-.4 3" fill="none" stroke="#222" stroke-width=".8"/><path d="M22.1 110.1 l1.6 -1.6 l1.4 1.2" fill="none" stroke="#fff" stroke-width=".7"/><rect x="19.40" y="116.75" width="4.6" height="4.6" fill="#fff" stroke="#8a8a8a" stroke-width=".7"/><path d="M20.40 119.05 h2.6" stroke="#222" stroke-width=".8"/><path d="M21.70 117.75 v2.6" stroke="#222" stroke-width=".8"/><rect x="28.3" y="114.8" width="8.2" height="8" fill="#157a7a"/><path d="M29.1 121.6 l2.4 -3 l2 1.8 l2.2 -2.6" stroke="#fff" stroke-width="1" fill="none"/><rect x="32.7" y="115.4" width="3" height="2.6" fill="#e8eef2" stroke="#123" stroke-width=".5"/><rect x="29.1" y="115.6" width="2.6" height="2.4" fill="#0d3d3d"/><rect x="19.40" y="128.29" width="4.6" height="4.6" fill="#fff" stroke="#8a8a8a" stroke-width=".7"/><path d="M20.40 130.59 h2.6" stroke="#222" stroke-width=".8"/><path d="M21.70 129.29 v2.6" stroke="#222" stroke-width=".8"/><rect x="28.3" y="126.4" width="8.2" height="8" fill="#157a7a"/><path d="M29.1 133.2 l2.4 -3 l2 1.8 l2.2 -2.6" stroke="#fff" stroke-width="1" fill="none"/><rect x="32.7" y="127.0" width="3" height="2.6" fill="#e8eef2" stroke="#123" stroke-width=".5"/><rect x="29.1" y="127.2" width="2.6" height="2.4" fill="#0d3d3d"/><rect x="19.40" y="139.83" width="4.6" height="4.6" fill="#fff" stroke="#8a8a8a" stroke-width=".7"/><path d="M20.40 142.13 h2.6" stroke="#222" stroke-width=".8"/><path d="M21.70 140.83 v2.6" stroke="#222" stroke-width=".8"/><path d="M28.9 144.5 c1.5 -3 4 -4.5 7 -4 l-.6 2.4 c-2.5 -.4 -4 .6 -5 2.6 z" fill="#2a3a44" stroke="#111" stroke-width=".4"/><circle cx="33.7" cy="143.5" r="1" fill="#1a9a9a"/><rect x="19.40" y="151.38" width="4.6" height="4.6" fill="#fff" stroke="#8a8a8a" stroke-width=".7"/><path d="M20.40 153.68 h2.6" stroke="#222" stroke-width=".8"/><path d="M21.70 152.38 v2.6" stroke="#222" stroke-width=".8"/><rect x="28.6" y="153.1" width="4.6" height="4.2" fill="#2a3a3a" stroke="#111" stroke-width=".4"/><path d="M30.3 152.1 l2.6 -1.8 l2.8 1 v3.2 l-2.2 1.6" fill="#dfe5ea" stroke="#123" stroke-width=".7"/><path d="M33.7 150.5 l2.4 -.6 l-.4 3" fill="none" stroke="#222" stroke-width=".8"/><path d="M29.1 156.3 l1.6 -1.6 l1.4 1.2" fill="none" stroke="#fff" stroke-width=".7"/><rect x="19.40" y="162.92" width="4.6" height="4.6" fill="#fff" stroke="#8a8a8a" stroke-width=".7"/><path d="M20.40 165.22 h2.6" stroke="#222" stroke-width=".8"/><path d="M21.70 163.92 v2.6" stroke="#222" stroke-width=".8"/><rect x="28.3" y="161.0" width="8.2" height="8" fill="#157a7a"/><path d="M29.1 167.8 l2.4 -3 l2 1.8 l2.2 -2.6" stroke="#fff" stroke-width="1" fill="none"/><rect x="32.7" y="161.6" width="3" height="2.6" fill="#e8eef2" stroke="#123" stroke-width=".5"/><rect x="29.1" y="161.8" width="2.6" height="2.4" fill="#0d3d3d"/><rect x="19.40" y="174.47" width="4.6" height="4.6" fill="#fff" stroke="#8a8a8a" stroke-width=".7"/><path d="M20.40 176.77 h2.6" stroke="#222" stroke-width=".8"/><path d="M21.70 175.47 v2.6" stroke="#222" stroke-width=".8"/><rect x="28.3" y="172.6" width="8.2" height="8" fill="#157a7a"/><path d="M29.1 179.4 l2.4 -3 l2 1.8 l2.2 -2.6" stroke="#fff" stroke-width="1" fill="none"/><rect x="32.7" y="173.2" width="3" height="2.6" fill="#e8eef2" stroke="#123" stroke-width=".5"/><rect x="29.1" y="173.4" width="2.6" height="2.4" fill="#0d3d3d"/><rect x="19.40" y="186.01" width="4.6" height="4.6" fill="#fff" stroke="#8a8a8a" stroke-width=".7"/><path d="M20.40 188.31 h2.6" stroke="#222" stroke-width=".8"/><path d="M21.70 187.01 v2.6" stroke="#222" stroke-width=".8"/><rect x="28.3" y="184.1" width="8.2" height="8" fill="#157a7a"/><path d="M29.1 190.9 l2.4 -3 l2 1.8 l2.2 -2.6" stroke="#fff" stroke-width="1" fill="none"/><rect x="32.7" y="184.7" width="3" height="2.6" fill="#e8eef2" stroke="#123" stroke-width=".5"/><rect x="29.1" y="184.9" width="2.6" height="2.4" fill="#0d3d3d"/><rect x="19.40" y="197.56" width="4.6" height="4.6" fill="#fff" stroke="#8a8a8a" stroke-width=".7"/><path d="M20.40 199.86 h2.6" stroke="#222" stroke-width=".8"/><path d="M21.70 198.56 v2.6" stroke="#222" stroke-width=".8"/><rect x="28.6" y="199.3" width="4.6" height="4.2" fill="#2a3a3a" stroke="#111" stroke-width=".4"/><path d="M30.3 198.3 l2.6 -1.8 l2.8 1 v3.2 l-2.2 1.6" fill="#dfe5ea" stroke="#123" stroke-width=".7"/><path d="M33.7 196.7 l2.4 -.6 l-.4 3" fill="none" stroke="#222" stroke-width=".8"/><path d="M29.1 202.5 l1.6 -1.6 l1.4 1.2" fill="none" stroke="#fff" stroke-width=".7"/><rect x="19.40" y="209.10" width="4.6" height="4.6" fill="#fff" stroke="#8a8a8a" stroke-width=".7"/><path d="M20.40 211.41 h2.6" stroke="#222" stroke-width=".8"/><path d="M21.70 210.10 v2.6" stroke="#222" stroke-width=".8"/><rect x="28.3" y="207.2" width="8.2" height="8" fill="#157a7a"/><path d="M29.1 214.0 l2.4 -3 l2 1.8 l2.2 -2.6" stroke="#fff" stroke-width="1" fill="none"/><rect x="32.7" y="207.8" width="3" height="2.6" fill="#e8eef2" stroke="#123" stroke-width=".5"/><rect x="29.1" y="208.0" width="2.6" height="2.4" fill="#0d3d3d"/><rect x="19.40" y="220.65" width="4.6" height="4.6" fill="#fff" stroke="#8a8a8a" stroke-width=".7"/><path d="M20.40 222.95 h2.6" stroke="#222" stroke-width=".8"/><path d="M21.70 221.65 v2.6" stroke="#222" stroke-width=".8"/><rect x="28.6" y="222.3" width="4.6" height="4.2" fill="#2a3a3a" stroke="#111" stroke-width=".4"/><path d="M30.3 221.3 l2.6 -1.8 l2.8 1 v3.2 l-2.2 1.6" fill="#dfe5ea" stroke="#123" stroke-width=".7"/><path d="M33.7 219.8 l2.4 -.6 l-.4 3" fill="none" stroke="#222" stroke-width=".8"/><path d="M29.1 225.5 l1.6 -1.6 l1.4 1.2" fill="none" stroke="#fff" stroke-width=".7"/><rect x="19.40" y="232.19" width="4.6" height="4.6" fill="#fff" stroke="#8a8a8a" stroke-width=".7"/><path d="M20.40 234.50 h2.6" stroke="#222" stroke-width=".8"/><path d="M21.70 233.19 v2.6" stroke="#222" stroke-width=".8"/><rect x="28.3" y="230.3" width="8.2" height="8" fill="#157a7a"/><path d="M29.1 237.1 l2.4 -3 l2 1.8 l2.2 -2.6" stroke="#fff" stroke-width="1" fill="none"/><rect x="32.7" y="230.9" width="3" height="2.6" fill="#e8eef2" stroke="#123" stroke-width=".5"/><rect x="29.1" y="231.1" width="2.6" height="2.4" fill="#0d3d3d"/><rect x="19.40" y="243.74" width="4.6" height="4.6" fill="#fff" stroke="#8a8a8a" stroke-width=".7"/><path d="M20.40 246.04 h2.6" stroke="#222" stroke-width=".8"/><path d="M21.70 244.74 v2.6" stroke="#222" stroke-width=".8"/><rect x="28.6" y="245.4" width="4.6" height="4.2" fill="#2a3a3a" stroke="#111" stroke-width=".4"/><path d="M30.3 244.4 l2.6 -1.8 l2.8 1 v3.2 l-2.2 1.6" fill="#dfe5ea" stroke="#123" stroke-width=".7"/><path d="M33.7 242.8 l2.4 -.6 l-.4 3" fill="none" stroke="#222" stroke-width=".8"/><path d="M29.1 248.6 l1.6 -1.6 l1.4 1.2" fill="none" stroke="#fff" stroke-width=".7"/><rect x="19.40" y="255.29" width="4.6" height="4.6" fill="#fff" stroke="#8a8a8a" stroke-width=".7"/><path d="M20.40 257.59 h2.6" stroke="#222" stroke-width=".8"/><path d="M21.70 256.29 v2.6" stroke="#222" stroke-width=".8"/><rect x="28.6" y="257.0" width="4.6" height="4.2" fill="#2a3a3a" stroke="#111" stroke-width=".4"/><path d="M30.3 256.0 l2.6 -1.8 l2.8 1 v3.2 l-2.2 1.6" fill="#dfe5ea" stroke="#123" stroke-width=".7"/><path d="M33.7 254.4 l2.4 -.6 l-.4 3" fill="none" stroke="#222" stroke-width=".8"/><path d="M29.1 260.2 l1.6 -1.6 l1.4 1.2" fill="none" stroke="#fff" stroke-width=".7"/><rect x="19.40" y="266.83" width="4.6" height="4.6" fill="#fff" stroke="#8a8a8a" stroke-width=".7"/><path d="M20.40 269.13 h2.6" stroke="#222" stroke-width=".8"/><path d="M21.70 267.83 v2.6" stroke="#222" stroke-width=".8"/><rect x="28.3" y="264.9" width="8.2" height="8" fill="#157a7a"/><path d="M29.1 271.7 l2.4 -3 l2 1.8 l2.2 -2.6" stroke="#fff" stroke-width="1" fill="none"/><rect x="32.7" y="265.5" width="3" height="2.6" fill="#e8eef2" stroke="#123" stroke-width=".5"/><rect x="29.1" y="265.7" width="2.6" height="2.4" fill="#0d3d3d"/><rect x="19.40" y="278.38" width="4.6" height="4.6" fill="#fff" stroke="#8a8a8a" stroke-width=".7"/><path d="M20.40 280.68 h2.6" stroke="#222" stroke-width=".8"/><path d="M21.70 279.38 v2.6" stroke="#222" stroke-width=".8"/><rect x="28.6" y="280.1" width="4.6" height="4.2" fill="#2a3a3a" stroke="#111" stroke-width=".4"/><path d="M30.3 279.1 l2.6 -1.8 l2.8 1 v3.2 l-2.2 1.6" fill="#dfe5ea" stroke="#123" stroke-width=".7"/><path d="M33.7 277.5 l2.4 -.6 l-.4 3" fill="none" stroke="#222" stroke-width=".8"/><path d="M29.1 283.3 l1.6 -1.6 l1.4 1.2" fill="none" stroke="#fff" stroke-width=".7"/><rect x="19.40" y="289.92" width="4.6" height="4.6" fill="#fff" stroke="#8a8a8a" stroke-width=".7"/><path d="M20.40 292.22 h2.6" stroke="#222" stroke-width=".8"/><path d="M21.70 290.92 v2.6" stroke="#222" stroke-width=".8"/><rect x="28.3" y="288.0" width="8.2" height="8" fill="#157a7a"/><path d="M29.1 294.8 l2.4 -3 l2 1.8 l2.2 -2.6" stroke="#fff" stroke-width="1" fill="none"/><rect x="32.7" y="288.6" width="3" height="2.6" fill="#e8eef2" stroke="#123" stroke-width=".5"/><rect x="29.1" y="288.8" width="2.6" height="2.4" fill="#0d3d3d"/><rect x="19.40" y="301.46" width="4.6" height="4.6" fill="#fff" stroke="#8a8a8a" stroke-width=".7"/><path d="M20.40 303.76 h2.6" stroke="#222" stroke-width=".8"/><path d="M21.70 302.46 v2.6" stroke="#222" stroke-width=".8"/><rect x="28.6" y="303.2" width="4.6" height="4.2" fill="#2a3a3a" stroke="#111" stroke-width=".4"/><path d="M30.3 302.2 l2.6 -1.8 l2.8 1 v3.2 l-2.2 1.6" fill="#dfe5ea" stroke="#123" stroke-width=".7"/><path d="M33.7 300.6 l2.4 -.6 l-.4 3" fill="none" stroke="#222" stroke-width=".8"/><path d="M29.1 306.4 l1.6 -1.6 l1.4 1.2" fill="none" stroke="#fff" stroke-width=".7"/><rect x="19.40" y="313.01" width="4.6" height="4.6" fill="#fff" stroke="#8a8a8a" stroke-width=".7"/><path d="M20.40 315.31 h2.6" stroke="#222" stroke-width=".8"/><path d="M21.70 314.01 v2.6" stroke="#222" stroke-width=".8"/><rect x="28.3" y="311.1" width="8.2" height="8" fill="#157a7a"/><path d="M29.1 317.9 l2.4 -3 l2 1.8 l2.2 -2.6" stroke="#fff" stroke-width="1" fill="none"/><rect x="32.7" y="311.7" width="3" height="2.6" fill="#e8eef2" stroke="#123" stroke-width=".5"/><rect x="29.1" y="311.9" width="2.6" height="2.4" fill="#0d3d3d"/><rect x="19.40" y="324.56" width="4.6" height="4.6" fill="#fff" stroke="#8a8a8a" stroke-width=".7"/><path d="M20.40 326.86 h2.6" stroke="#222" stroke-width=".8"/><path d="M21.70 325.56 v2.6" stroke="#222" stroke-width=".8"/><rect x="28.6" y="326.3" width="4.6" height="4.2" fill="#2a3a3a" stroke="#111" stroke-width=".4"/><path d="M30.3 325.3 l2.6 -1.8 l2.8 1 v3.2 l-2.2 1.6" fill="#dfe5ea" stroke="#123" stroke-width=".7"/><path d="M33.7 323.7 l2.4 -.6 l-.4 3" fill="none" stroke="#222" stroke-width=".8"/><path d="M29.1 329.5 l1.6 -1.6 l1.4 1.2" fill="none" stroke="#fff" stroke-width=".7"/><rect x="19.40" y="336.10" width="4.6" height="4.6" fill="#fff" stroke="#8a8a8a" stroke-width=".7"/><path d="M20.40 338.40 h2.6" stroke="#222" stroke-width=".8"/><path d="M21.70 337.10 v2.6" stroke="#222" stroke-width=".8"/><rect x="28.3" y="334.2" width="8.2" height="8" fill="#157a7a"/><path d="M29.1 341.0 l2.4 -3 l2 1.8 l2.2 -2.6" stroke="#fff" stroke-width="1" fill="none"/><rect x="32.7" y="334.8" width="3" height="2.6" fill="#e8eef2" stroke="#123" stroke-width=".5"/><rect x="29.1" y="335.0" width="2.6" height="2.4" fill="#0d3d3d"/><rect x="19.40" y="347.64" width="4.6" height="4.6" fill="#fff" stroke="#8a8a8a" stroke-width=".7"/><path d="M20.40 349.94 h2.6" stroke="#222" stroke-width=".8"/><path d="M21.70 348.64 v2.6" stroke="#222" stroke-width=".8"/><rect x="28.6" y="349.3" width="4.6" height="4.2" fill="#2a3a3a" stroke="#111" stroke-width=".4"/><path d="M30.3 348.3 l2.6 -1.8 l2.8 1 v3.2 l-2.2 1.6" fill="#dfe5ea" stroke="#123" stroke-width=".7"/><path d="M33.7 346.7 l2.4 -.6 l-.4 3" fill="none" stroke="#222" stroke-width=".8"/><path d="M29.1 352.5 l1.6 -1.6 l1.4 1.2" fill="none" stroke="#fff" stroke-width=".7"/><rect x="19.40" y="359.19" width="4.6" height="4.6" fill="#fff" stroke="#8a8a8a" stroke-width=".7"/><path d="M20.40 361.49 h2.6" stroke="#222" stroke-width=".8"/><path d="M21.70 360.19 v2.6" stroke="#222" stroke-width=".8"/><rect x="28.6" y="360.9" width="4.6" height="4.2" fill="#2a3a3a" stroke="#111" stroke-width=".4"/><path d="M30.3 359.9 l2.6 -1.8 l2.8 1 v3.2 l-2.2 1.6" fill="#dfe5ea" stroke="#123" stroke-width=".7"/><path d="M33.7 358.3 l2.4 -.6 l-.4 3" fill="none" stroke="#222" stroke-width=".8"/><path d="M29.1 364.1 l1.6 -1.6 l1.4 1.2" fill="none" stroke="#fff" stroke-width=".7"/></svg>
<div class="a" style="left:7.5px;top:475px;width:89px;height:12.5px;background:#d9d9d9"></div>
<svg class="a" style="left:0;top:470px" width="106" height="22" viewBox="0 470 106 22"><path d="M9.9 483.9 c1.5 -3.5 4.5 -5 8 -4.2 l-.8 2.6 c-2.6 -.5 -4.2 .6 -5.4 2.8 z" fill="#34424a" stroke="#111" stroke-width=".4"/><circle cx="14.9" cy="481.1" r="1.1" fill="#eee"/><rect x="23.1" y="480.9" width="4.6" height="4.2" fill="#2a3a3a" stroke="#111" stroke-width=".4"/><path d="M24.8 479.9 l2.6 -1.8 l2.8 1 v3.2 l-2.2 1.6" fill="#dfe5ea" stroke="#123" stroke-width=".7"/><path d="M28.2 478.3 l2.4 -.6 l-.4 3" fill="none" stroke="#222" stroke-width=".8"/><path d="M23.6 484.1 l1.6 -1.6 l1.4 1.2" fill="none" stroke="#fff" stroke-width=".7"/><rect x="34.5" y="478.5" width="9" height="7.6" fill="#f4f4f4" stroke="#333" stroke-width=".8"/><path d="M34.5 481.5 h9 M39.0 480.1 v4" stroke="#333" stroke-width=".7"/><rect x="37.0" y="476.7" width="4" height="1.8" fill="#333"/><rect x="49.1" y="477.8" width="4.8" height="7.4" fill="#f2e020" stroke="#554" stroke-width=".7"/><path d="M59.5 481.5 l5 -4.6 l5 4.6 l-5 4.6 z" fill="#fafafa" stroke="#333" stroke-width=".7"/><path d="M62.9 479.9 l3.2 2.6 M64.1 482.5 l2.6 -.6" stroke="#1a7a3a" stroke-width="1"/><path d="M73.2 478.1 l7 5.6" stroke="#e8d820" stroke-width="2.4"/><path d="M76.2 484.5 l2 -3.4 l2 2.4" stroke="#2a5a3a" stroke-width="1" fill="none"/><path d="M78.4 478.9 l3 -1" stroke="#333" stroke-width=".9"/><circle cx="90.2" cy="481.5" r="3.8" fill="#1a4a3a" stroke="#111" stroke-width=".5"/><path d="M88.2 481.5 l2 -1.6 l1.4 1.8 l-1.2 2" stroke="#e8d820" stroke-width="1" fill="none"/></svg>
<div id="vtb" class="a"></div>
<div class="a" style="left:108px;top:61.5px;width:14.5px;height:56px;background:linear-gradient(90deg,#f8f8f8,#ececec);border:1px solid #fcfcfc;border-right-color:#cfcfcf;border-bottom-color:#cfcfcf;border-radius:1.5px"></div>
<div class="a" style="left:108px;top:119px;width:14.5px;height:167.5px;background:linear-gradient(90deg,#f8f8f8,#ececec);border:1px solid #fcfcfc;border-right-color:#cfcfcf;border-bottom-color:#cfcfcf;border-radius:1.5px"></div>
<div class="a" style="left:108px;top:295.5px;width:14.5px;height:84px;background:linear-gradient(90deg,#f8f8f8,#ececec);border:1px solid #fcfcfc;border-right-color:#cfcfcf;border-bottom-color:#cfcfcf;border-radius:1.5px"></div>
<svg class="a" style="left:0;top:0" width="124" height="492" viewBox="0 0 124 492"><g transform="translate(115.0 71.8) scale(.9) translate(-115.0 -71.8)"><rect x="110.8" y="67.8" width="8.4" height="8.0" fill="#4a4f54" stroke="#333" stroke-width="0.4"/><path transform="translate(110.5 67.3)" d="M1.5 6c1.5-3 3.5-4 6-3.5" fill="none" stroke="#fff" stroke-width="1.1"/><circle cx="115.5" cy="72.8" r="1.2" fill="#1a7a7a" stroke="#fff" stroke-width="0.4"/></g><g transform="translate(115.0 83.8) scale(.9) translate(-115.0 -83.8)"><rect x="110.8" y="79.8" width="8.4" height="8.0" fill="#2a4a4f" stroke="#223" stroke-width="0.4"/><path transform="translate(110.5 79.3)" d="M1.5 3l3 2.5-2.5 2" fill="none" stroke="#fff" stroke-width="1"/><rect x="115.5" y="80.8" width="2.5" height="2.5" fill="#2aa" stroke="#fff" stroke-width="0.4"/></g><g transform="translate(115.0 95.8) scale(.9) translate(-115.0 -95.8)"><rect x="111.0" y="94.3" width="8.0" height="3.5" fill="#444" stroke="#222" stroke-width="0.5"/><rect x="112.5" y="92.1" width="5.0" height="2.4" fill="#666" stroke="#222" stroke-width="0.5"/><rect x="112.3" y="97.3" width="5.4" height="2.5" fill="#fff" stroke="#222" stroke-width="0.5"/></g><g transform="translate(115.0 107.8) scale(.9) translate(-115.0 -107.8)"><rect x="110.8" y="103.8" width="8.4" height="8.0" fill="#e8e8f0" stroke="#223" stroke-width="0.6"/><line x1="112.0" y1="106.3" x2="118.0" y2="106.3" stroke="#223" stroke-width="0.8"/><line x1="112.0" y1="108.3" x2="118.0" y2="108.3" stroke="#24a" stroke-width="0.8"/><line x1="112.0" y1="110.3" x2="118.0" y2="110.3" stroke="#223" stroke-width="0.8"/><rect x="111.8" y="104.9" width="2.0" height="2.0" fill="#223" stroke="#223" stroke-width="0.2"/></g><path d="M111.6 132.5 q3 -5 6.5 -4.5 M111.6 132.8 h6.5" fill="none" stroke="#333" stroke-width=".8"/><path d="M113.3 132.4 l3 -3 l1.5 3 z" fill="#1f9a9a"/><rect x="115.7" y="127.4" width="2" height="2" fill="#d82"/><path d="M117.6 134.2 h1.8 v-1.8 z" fill="#111"/><rect x="111.8" y="140.3" width="6" height="5" fill="#1f8f8f" stroke="#223" stroke-width=".6"/><path d="M112.4 143.9 l2 -2 l2 2 l1.6 -1.6" fill="none" stroke="#fff" stroke-width=".8"/><path d="M117.6 146.5 h1.8 v-1.8 z" fill="#111"/><path d="M112.0 157.0 v-5 h4 l2 2 v3 z" fill="#fdfdfd" stroke="#333" stroke-width=".7"/><path d="M113.4 153.4 h3 v3 z" fill="#1f9a9a"/><path d="M117.6 158.2 h1.8 v-1.8 z" fill="#111"/><path d="M112.0 169.2 v-5 h4 l2 2 v3 z" fill="#fdfdfd" stroke="#333" stroke-width=".7"/><path d="M113.4 165.6 h3 v3 z" fill="#1f9a9a"/><rect x="115.6" y="163.3" width="2" height="2" fill="#d82"/><path d="M117.6 170.4 h1.8 v-1.8 z" fill="#111"/><path d="M111.6 180.7 q3 -5 6.5 -4.5 M111.6 181.0 h6.5" fill="none" stroke="#333" stroke-width=".8"/><path d="M113.3 180.6 l3 -3 l1.5 3 z" fill="#1f9a9a"/><rect x="116.1" y="175.5" width="2" height="2" fill="#c22"/><path d="M117.6 182.4 h1.8 v-1.8 z" fill="#111"/><path d="M111.8 187.5 h5.5 v5.5 h-5.5 z" fill="#fdfdfd" stroke="#333" stroke-width=".7"/><path d="M113.0 192.3 l3.5 -3.5 v3.5 z" fill="#1f9a9a"/><path d="M117.6 194.2 h1.8 v-1.8 z" fill="#111"/><path d="M111.6 204.5 q3 -5 6.5 -4.5 M111.6 204.8 h6.5" fill="none" stroke="#333" stroke-width=".8"/><path d="M113.3 204.4 l3 -3 l1.5 3 z" fill="#1f9a9a"/><path d="M117.6 206.2 h1.8 v-1.8 z" fill="#111"/><path d="M111.6 213.3 l2.5 -2 h4 v4.5 l-2.5 2 h-4 z" fill="#fdfdfd" stroke="#333" stroke-width=".7"/><rect x="112.0" y="213.7" width="3.6" height="3.8" fill="#1f9a9a"/><path d="M117.6 218.5 h1.8 v-1.8 z" fill="#111"/><path d="M112.0 229.2 v-5 h4 l2 2 v3 z" fill="#fdfdfd" stroke="#333" stroke-width=".7"/><path d="M113.4 225.6 h3 v3 z" fill="#1f9a9a"/><path d="M117.6 230.4 h1.8 v-1.8 z" fill="#111"/><path d="M111.8 235.9 h5.5 v5.5 h-5.5 z" fill="#fdfdfd" stroke="#333" stroke-width=".7"/><path d="M113.0 240.7 l3.5 -3.5 v3.5 z" fill="#1f9a9a"/><rect x="115.3" y="235.1" width="2" height="2" fill="#223"/><path d="M117.6 242.6 h1.8 v-1.8 z" fill="#111"/><path d="M111.6 252.8 q3 -5 6.5 -4.5 M111.6 253.1 h6.5" fill="none" stroke="#333" stroke-width=".8"/><path d="M113.3 252.7 l3 -3 l1.5 3 z" fill="#1f9a9a"/><path d="M117.6 254.5 h1.8 v-1.8 z" fill="#111"/><path d="M111.8 259.8 h5.5 v5.5 h-5.5 z" fill="#fdfdfd" stroke="#333" stroke-width=".7"/><path d="M113.0 264.6 l3.5 -3.5 v3.5 z" fill="#1f9a9a"/><path d="M117.6 266.5 h1.8 v-1.8 z" fill="#111"/><path d="M111.8 272.0 h5.5 v5.5 h-5.5 z" fill="#fdfdfd" stroke="#333" stroke-width=".7"/><path d="M113.0 276.8 l3.5 -3.5 v3.5 z" fill="#1f9a9a"/><path d="M117.6 278.7 h1.8 v-1.8 z" fill="#111"/><path d="M111.8 305.5 h6 M114.8 305.5 v4 M111.8 309.5 h5" stroke="#333" stroke-width=".8" fill="none"/><circle cx="113.0" cy="309.2" r="1.4" fill="none" stroke="#333" stroke-width=".7"/><path d="M117.6 312.2 h1.8 v-1.8 z" fill="#111"/><rect x="111.6" y="317.5" width="2.4" height="6" fill="#d88" stroke="#733" stroke-width=".5"/><rect x="115.8" y="317.5" width="2.4" height="6" fill="#d88" stroke="#733" stroke-width=".5"/><path d="M114.9 317.1 v6.5" stroke="#222" stroke-width=".8"/><path d="M117.6 324.7 h1.8 v-1.8 z" fill="#111"/><path d="M111.8 329.3 l6 5 M117.8 329.3 l-6 5" stroke="#333" stroke-width=".8"/><path d="M111.5 332.5 h7" stroke="#2ab" stroke-width="1.4"/><path d="M117.6 336.5 h1.8 v-1.8 z" fill="#111"/><rect x="111.8" y="341.7" width="4" height="3" fill="#fff" stroke="#333" stroke-width=".7"/><path d="M113.8 345.1 l2 2.4 l1.6 -3" stroke="#c22" stroke-width="1.2" fill="none"/><path d="M117.6 348.9 h1.8 v-1.8 z" fill="#111"/><rect x="111.0" y="353.4" width="8" height="7" fill="#2a4a50"/><path d="M111.0 355.7 h8 M111.0 358.1 h8 M113.7 353.4 v7 M116.4 353.4 v7" stroke="#e8e8e8" stroke-width=".7"/><path d="M117.6 361.2 h1.8 v-1.8 z" fill="#111"/><rect x="111.2" y="365.5" width="1.4" height="7" fill="#e22"/><rect x="112.5" y="365.5" width="1.4" height="7" fill="#e8d820"/><rect x="113.8" y="365.5" width="1.4" height="7" fill="#2c2"/><rect x="115.1" y="365.5" width="1.4" height="7" fill="#2cc"/><rect x="116.4" y="365.5" width="1.4" height="7" fill="#22e"/><rect x="117.7" y="365.5" width="1.4" height="7" fill="#c2c"/><rect x="111.1" y="365.5" width="8" height="7" fill="none" stroke="#223" stroke-width=".6"/><path d="M117.6 373.2 h1.8 v-1.8 z" fill="#111"/><path d="M110 63.5 h10 M110 65.5 h10" stroke="#b0b0b0" stroke-width=".8"/><path d="M110 121 h10 M110 123 h10" stroke="#b0b0b0" stroke-width=".8"/><path d="M110 297.5 h10 M110 299.5 h10" stroke="#b0b0b0" stroke-width=".8"/></svg>
<div id="canvas" class="a"><svg class="a" style="left:-123px;top:-61.5px" width="1000" height="539" viewBox="0 0 1000 539" stroke-linecap="round">
<line x1="193.5" y1="338.7" x2="699.0" y2="132.7" stroke="#27706d" stroke-width="1.5"/>
<line x1="197.7" y1="321.0" x2="703.2" y2="115.0" stroke="#27706d" stroke-width="1.5"/>
<line x1="221.7" y1="288.7" x2="727.2" y2="82.7" stroke="#27706d" stroke-width="2.0"/>
<line x1="278.8" y1="282.6" x2="784.3" y2="76.6" stroke="#27706d" stroke-width="1.5"/>
<line x1="193.5" y1="365.8" x2="699.0" y2="159.8" stroke="#2fa39d" stroke-width="3.1"/>
<line x1="193.5" y1="365.8" x2="699.0" y2="159.8" stroke="#14504e" stroke-width="2.2" stroke-dasharray="0.9 1.5" stroke-linecap="butt"/>
<polyline points="193.5,366.0 218.8,328.4 244.1,340.4" fill="none" stroke="#6660d0" stroke-width="1.75"/>
<polyline points="210.7,301.8 222.9,310.7 261.3,281.2" fill="none" stroke="#6660d0" stroke-width="1.75"/>
<polyline points="210.7,301.8 247.0,278.4 261.3,281.2" fill="none" stroke="#6660d0" stroke-width="1.75"/>
<polyline points="257.2,280.8 260.5,269.2 307.7,260.2" fill="none" stroke="#6660d0" stroke-width="1.75"/>
<polyline points="257.2,280.8 304.0,272.3 307.7,260.2" fill="none" stroke="#6660d0" stroke-width="1.75"/>
<polyline points="244.1,345.4 269.3,307.8 294.6,319.8" fill="none" stroke="#6660d0" stroke-width="1.75"/>
<polyline points="261.3,281.2 273.5,290.1 311.8,260.6" fill="none" stroke="#6660d0" stroke-width="1.75"/>
<polyline points="261.3,281.2 297.6,257.8 311.8,260.6" fill="none" stroke="#6660d0" stroke-width="1.75"/>
<polyline points="307.7,260.2 311.0,248.6 358.3,239.6" fill="none" stroke="#6660d0" stroke-width="1.75"/>
<polyline points="307.7,260.2 354.6,251.7 358.3,239.6" fill="none" stroke="#6660d0" stroke-width="1.75"/>
<polyline points="294.6,324.8 319.9,287.2 345.1,299.2" fill="none" stroke="#6660d0" stroke-width="1.75"/>
<polyline points="311.8,260.6 324.0,269.5 362.4,240.0" fill="none" stroke="#6660d0" stroke-width="1.75"/>
<polyline points="311.8,260.6 348.1,237.2 362.4,240.0" fill="none" stroke="#6660d0" stroke-width="1.75"/>
<polyline points="358.3,239.6 361.6,228.0 408.8,219.0" fill="none" stroke="#6660d0" stroke-width="1.75"/>
<polyline points="358.3,239.6 405.1,231.1 408.8,219.0" fill="none" stroke="#6660d0" stroke-width="1.75"/>
<polyline points="345.1,304.2 370.4,266.6 395.7,278.6" fill="none" stroke="#6660d0" stroke-width="1.75"/>
<polyline points="362.4,240.0 374.6,248.9 412.9,219.4" fill="none" stroke="#6660d0" stroke-width="1.75"/>
<polyline points="362.4,240.0 398.7,216.6 412.9,219.4" fill="none" stroke="#6660d0" stroke-width="1.75"/>
<polyline points="408.8,219.0 412.1,207.4 459.4,198.4" fill="none" stroke="#6660d0" stroke-width="1.75"/>
<polyline points="408.8,219.0 455.7,210.5 459.4,198.4" fill="none" stroke="#6660d0" stroke-width="1.75"/>
<polyline points="395.7,283.6 421.0,246.0 446.2,258.0" fill="none" stroke="#6660d0" stroke-width="1.75"/>
<polyline points="412.9,219.4 425.1,228.3 463.5,198.8" fill="none" stroke="#6660d0" stroke-width="1.75"/>
<polyline points="412.9,219.4 449.2,196.0 463.5,198.8" fill="none" stroke="#6660d0" stroke-width="1.75"/>
<polyline points="459.4,198.4 462.7,186.8 509.9,177.8" fill="none" stroke="#6660d0" stroke-width="1.75"/>
<polyline points="459.4,198.4 506.2,189.9 509.9,177.8" fill="none" stroke="#6660d0" stroke-width="1.75"/>
<polyline points="446.2,263.0 471.5,225.4 496.8,237.4" fill="none" stroke="#6660d0" stroke-width="1.75"/>
<polyline points="463.5,198.8 475.7,207.7 514.0,178.2" fill="none" stroke="#6660d0" stroke-width="1.75"/>
<polyline points="463.5,198.8 499.8,175.4 514.0,178.2" fill="none" stroke="#6660d0" stroke-width="1.75"/>
<polyline points="509.9,177.8 513.2,166.2 560.5,157.2" fill="none" stroke="#6660d0" stroke-width="1.75"/>
<polyline points="509.9,177.8 556.8,169.3 560.5,157.2" fill="none" stroke="#6660d0" stroke-width="1.75"/>
<polyline points="496.8,242.4 522.1,204.8 547.3,216.8" fill="none" stroke="#6660d0" stroke-width="1.75"/>
<polyline points="514.0,178.2 526.2,187.1 564.6,157.6" fill="none" stroke="#6660d0" stroke-width="1.75"/>
<polyline points="514.0,178.2 550.3,154.8 564.6,157.6" fill="none" stroke="#6660d0" stroke-width="1.75"/>
<polyline points="560.5,157.2 563.8,145.6 611.0,136.6" fill="none" stroke="#6660d0" stroke-width="1.75"/>
<polyline points="560.5,157.2 607.3,148.7 611.0,136.6" fill="none" stroke="#6660d0" stroke-width="1.75"/>
<polyline points="547.3,221.8 572.6,184.2 597.9,196.2" fill="none" stroke="#6660d0" stroke-width="1.75"/>
<polyline points="564.6,157.6 576.8,166.5 615.1,137.0" fill="none" stroke="#6660d0" stroke-width="1.75"/>
<polyline points="564.6,157.6 600.9,134.2 615.1,137.0" fill="none" stroke="#6660d0" stroke-width="1.75"/>
<polyline points="611.0,136.6 614.3,125.0 661.6,116.0" fill="none" stroke="#6660d0" stroke-width="1.75"/>
<polyline points="611.0,136.6 657.9,128.1 661.6,116.0" fill="none" stroke="#6660d0" stroke-width="1.75"/>
<polyline points="597.9,201.2 623.2,163.6 648.5,175.6" fill="none" stroke="#6660d0" stroke-width="1.75"/>
<polyline points="615.1,137.0 627.3,145.9 665.7,116.4" fill="none" stroke="#6660d0" stroke-width="1.75"/>
<polyline points="615.1,137.0 651.4,113.6 665.7,116.4" fill="none" stroke="#6660d0" stroke-width="1.75"/>
<polyline points="661.6,116.0 664.9,104.4 712.1,95.4" fill="none" stroke="#6660d0" stroke-width="1.75"/>
<polyline points="661.6,116.0 708.5,107.5 712.1,95.4" fill="none" stroke="#6660d0" stroke-width="1.75"/>
<polyline points="648.5,180.6 673.7,143.0 699.0,155.0" fill="none" stroke="#6660d0" stroke-width="1.75"/>
<polyline points="665.7,116.4 677.9,125.3 716.2,95.8" fill="none" stroke="#6660d0" stroke-width="1.75"/>
<polyline points="665.7,116.4 702.0,93.0 716.2,95.8" fill="none" stroke="#6660d0" stroke-width="1.75"/>
<polyline points="712.1,95.4 715.4,83.8 762.7,74.8" fill="none" stroke="#6660d0" stroke-width="1.75"/>
<polyline points="712.1,95.4 759.0,86.9 762.7,74.8" fill="none" stroke="#6660d0" stroke-width="1.75"/>
<line x1="383.0" y1="429.5" x2="888.5" y2="223.5" stroke="#27706d" stroke-width="1.5"/>
<line x1="378.8" y1="407.8" x2="884.3" y2="201.8" stroke="#27706d" stroke-width="1.5"/>
<line x1="351.3" y1="345.1" x2="856.8" y2="139.1" stroke="#27706d" stroke-width="1.5"/>
<line x1="341.3" y1="330.3" x2="846.8" y2="124.3" stroke="#27706d" stroke-width="1.5"/>
<line x1="297.7" y1="291.6" x2="803.2" y2="85.6" stroke="#27706d" stroke-width="1.5"/>
<line x1="383.0" y1="456.6" x2="888.5" y2="250.6" stroke="#2fa39d" stroke-width="3.1"/>
<line x1="383.0" y1="456.6" x2="888.5" y2="250.6" stroke="#14504e" stroke-width="2.2" stroke-dasharray="0.9 1.5" stroke-linecap="butt"/>
<polyline points="383.0,456.8 408.3,419.2 433.6,431.2" fill="none" stroke="#6660d0" stroke-width="1.75"/>
<polyline points="365.8,376.0 404.1,397.5 416.3,355.4" fill="none" stroke="#6660d0" stroke-width="1.75"/>
<polyline points="365.8,376.0 376.5,334.8 416.3,355.4" fill="none" stroke="#6660d0" stroke-width="1.75"/>
<polyline points="319.3,310.6 366.6,320.0 369.9,290.0" fill="none" stroke="#6660d0" stroke-width="1.75"/>
<polyline points="319.3,310.6 323.0,281.3 369.9,290.0" fill="none" stroke="#6660d0" stroke-width="1.75"/>
<polyline points="433.6,436.2 458.8,398.6 484.1,410.6" fill="none" stroke="#6660d0" stroke-width="1.75"/>
<polyline points="416.3,355.4 454.7,376.9 466.9,334.8" fill="none" stroke="#6660d0" stroke-width="1.75"/>
<polyline points="416.3,355.4 427.1,314.2 466.9,334.8" fill="none" stroke="#6660d0" stroke-width="1.75"/>
<polyline points="369.9,290.0 417.1,299.4 420.4,269.4" fill="none" stroke="#6660d0" stroke-width="1.75"/>
<polyline points="369.9,290.0 373.6,260.7 420.4,269.4" fill="none" stroke="#6660d0" stroke-width="1.75"/>
<polyline points="484.1,415.6 509.4,378.0 534.6,390.0" fill="none" stroke="#6660d0" stroke-width="1.75"/>
<polyline points="466.9,334.8 505.2,356.3 517.4,314.2" fill="none" stroke="#6660d0" stroke-width="1.75"/>
<polyline points="466.9,334.8 477.6,293.6 517.4,314.2" fill="none" stroke="#6660d0" stroke-width="1.75"/>
<polyline points="420.4,269.4 467.7,278.8 471.0,248.8" fill="none" stroke="#6660d0" stroke-width="1.75"/>
<polyline points="420.4,269.4 424.1,240.1 471.0,248.8" fill="none" stroke="#6660d0" stroke-width="1.75"/>
<polyline points="534.6,395.0 559.9,357.4 585.2,369.4" fill="none" stroke="#6660d0" stroke-width="1.75"/>
<polyline points="517.4,314.2 555.8,335.7 568.0,293.6" fill="none" stroke="#6660d0" stroke-width="1.75"/>
<polyline points="517.4,314.2 528.2,273.0 568.0,293.6" fill="none" stroke="#6660d0" stroke-width="1.75"/>
<polyline points="471.0,248.8 518.2,258.2 521.5,228.2" fill="none" stroke="#6660d0" stroke-width="1.75"/>
<polyline points="471.0,248.8 474.6,219.5 521.5,228.2" fill="none" stroke="#6660d0" stroke-width="1.75"/>
<polyline points="585.2,374.4 610.5,336.8 635.8,348.8" fill="none" stroke="#6660d0" stroke-width="1.75"/>
<polyline points="568.0,293.6 606.3,315.1 618.5,273.0" fill="none" stroke="#6660d0" stroke-width="1.75"/>
<polyline points="568.0,293.6 578.7,252.4 618.5,273.0" fill="none" stroke="#6660d0" stroke-width="1.75"/>
<polyline points="521.5,228.2 568.8,237.6 572.1,207.6" fill="none" stroke="#6660d0" stroke-width="1.75"/>
<polyline points="521.5,228.2 525.2,198.9 572.1,207.6" fill="none" stroke="#6660d0" stroke-width="1.75"/>
<polyline points="635.8,353.8 661.0,316.2 686.3,328.2" fill="none" stroke="#6660d0" stroke-width="1.75"/>
<polyline points="618.5,273.0 656.9,294.5 669.1,252.4" fill="none" stroke="#6660d0" stroke-width="1.75"/>
<polyline points="618.5,273.0 629.3,231.8 669.1,252.4" fill="none" stroke="#6660d0" stroke-width="1.75"/>
<polyline points="572.1,207.6 619.3,217.0 622.6,187.0" fill="none" stroke="#6660d0" stroke-width="1.75"/>
<polyline points="572.1,207.6 575.8,178.3 622.6,187.0" fill="none" stroke="#6660d0" stroke-width="1.75"/>
<polyline points="686.3,333.2 711.6,295.6 736.8,307.6" fill="none" stroke="#6660d0" stroke-width="1.75"/>
<polyline points="669.1,252.4 707.4,273.9 719.6,231.8" fill="none" stroke="#6660d0" stroke-width="1.75"/>
<polyline points="669.1,252.4 679.8,211.2 719.6,231.8" fill="none" stroke="#6660d0" stroke-width="1.75"/>
<polyline points="622.6,187.0 669.9,196.4 673.2,166.4" fill="none" stroke="#6660d0" stroke-width="1.75"/>
<polyline points="622.6,187.0 626.3,157.7 673.2,166.4" fill="none" stroke="#6660d0" stroke-width="1.75"/>
<polyline points="736.8,312.6 762.1,275.0 787.4,287.0" fill="none" stroke="#6660d0" stroke-width="1.75"/>
<polyline points="719.6,231.8 758.0,253.3 770.2,211.2" fill="none" stroke="#6660d0" stroke-width="1.75"/>
<polyline points="719.6,231.8 730.4,190.6 770.2,211.2" fill="none" stroke="#6660d0" stroke-width="1.75"/>
<polyline points="673.2,166.4 720.4,175.8 723.7,145.8" fill="none" stroke="#6660d0" stroke-width="1.75"/>
<polyline points="673.2,166.4 676.8,137.1 723.7,145.8" fill="none" stroke="#6660d0" stroke-width="1.75"/>
<polyline points="787.4,292.0 812.7,254.4 838.0,266.4" fill="none" stroke="#6660d0" stroke-width="1.75"/>
<polyline points="770.2,211.2 808.5,232.7 820.7,190.6" fill="none" stroke="#6660d0" stroke-width="1.75"/>
<polyline points="770.2,211.2 780.9,170.0 820.7,190.6" fill="none" stroke="#6660d0" stroke-width="1.75"/>
<polyline points="723.7,145.8 771.0,155.2 774.3,125.2" fill="none" stroke="#6660d0" stroke-width="1.75"/>
<polyline points="723.7,145.8 727.4,116.5 774.3,125.2" fill="none" stroke="#6660d0" stroke-width="1.75"/>
<polyline points="838.0,271.4 863.2,233.8 888.5,245.8" fill="none" stroke="#6660d0" stroke-width="1.75"/>
<polyline points="820.7,190.6 859.1,212.1 871.3,170.0" fill="none" stroke="#6660d0" stroke-width="1.75"/>
<polyline points="820.7,190.6 831.5,149.4 871.3,170.0" fill="none" stroke="#6660d0" stroke-width="1.75"/>
<polyline points="774.3,125.2 821.5,134.6 824.8,104.6" fill="none" stroke="#6660d0" stroke-width="1.75"/>
<polyline points="774.3,125.2 778.0,95.9 824.8,104.6" fill="none" stroke="#6660d0" stroke-width="1.75"/>
<line x1="278.8" y1="282.6" x2="348.3" y2="271.0" stroke="#6660d0" stroke-width="1.5"/>
<line x1="297.7" y1="291.6" x2="329.3" y2="262.0" stroke="#6660d0" stroke-width="1.5"/>
<line x1="329.3" y1="262.0" x2="398.8" y2="250.4" stroke="#6660d0" stroke-width="1.5"/>
<line x1="348.3" y1="271.0" x2="379.9" y2="241.4" stroke="#6660d0" stroke-width="1.5"/>
<line x1="379.9" y1="241.4" x2="449.4" y2="229.8" stroke="#6660d0" stroke-width="1.5"/>
<line x1="398.8" y1="250.4" x2="430.4" y2="220.8" stroke="#6660d0" stroke-width="1.5"/>
<line x1="430.4" y1="220.8" x2="499.9" y2="209.2" stroke="#6660d0" stroke-width="1.5"/>
<line x1="449.4" y1="229.8" x2="481.0" y2="200.2" stroke="#6660d0" stroke-width="1.5"/>
<line x1="481.0" y1="200.2" x2="550.5" y2="188.6" stroke="#6660d0" stroke-width="1.5"/>
<line x1="499.9" y1="209.2" x2="531.5" y2="179.6" stroke="#6660d0" stroke-width="1.5"/>
<line x1="531.5" y1="179.6" x2="601.0" y2="168.0" stroke="#6660d0" stroke-width="1.5"/>
<line x1="550.5" y1="188.6" x2="582.1" y2="159.0" stroke="#6660d0" stroke-width="1.5"/>
<line x1="582.1" y1="159.0" x2="651.6" y2="147.4" stroke="#6660d0" stroke-width="1.5"/>
<line x1="601.0" y1="168.0" x2="632.6" y2="138.4" stroke="#6660d0" stroke-width="1.5"/>
<line x1="632.6" y1="138.4" x2="702.1" y2="126.8" stroke="#6660d0" stroke-width="1.5"/>
<line x1="651.6" y1="147.4" x2="683.2" y2="117.8" stroke="#6660d0" stroke-width="1.5"/>
<line x1="683.2" y1="117.8" x2="752.7" y2="106.2" stroke="#6660d0" stroke-width="1.5"/>
<line x1="702.1" y1="126.8" x2="733.7" y2="97.2" stroke="#6660d0" stroke-width="1.5"/>
<line x1="733.7" y1="97.2" x2="803.2" y2="85.6" stroke="#6660d0" stroke-width="1.5"/>
<line x1="752.7" y1="106.2" x2="784.3" y2="76.6" stroke="#6660d0" stroke-width="1.5"/>
<line x1="288.2" y1="283.4" x2="793.8" y2="77.4" stroke="#27706d" stroke-width="1.2"/>
<line x1="193.5" y1="367.0" x2="193.5" y2="327.0" stroke="#2d7f7b" stroke-width="2.6"/>
<line x1="193.5" y1="367.0" x2="193.5" y2="327.0" stroke="#0c2a29" stroke-width="0.9"/>
<line x1="193.5" y1="327.0" x2="197.1" y2="320.5" stroke="#2d7f7b" stroke-width="2.2"/>
<line x1="197.1" y1="320.5" x2="229.5" y2="278.8" stroke="#2d7f7b" stroke-width="1.7"/>
<line x1="229.5" y1="278.8" x2="288.2" y2="283.4" stroke="#2d7f7b" stroke-width="1.8"/>
<line x1="288.2" y1="283.4" x2="347.0" y2="335.0" stroke="#2d7f7b" stroke-width="3.1"/>
<line x1="288.2" y1="283.4" x2="347.0" y2="335.0" stroke="#0c2a29" stroke-width="1.4"/>
<line x1="347.0" y1="335.0" x2="379.4" y2="407.9" stroke="#2d7f7b" stroke-width="4.3"/>
<line x1="347.0" y1="335.0" x2="379.4" y2="407.9" stroke="#1f5f5d" stroke-width="0.8"/>
<line x1="379.4" y1="407.9" x2="383.0" y2="417.8" stroke="#2d7f7b" stroke-width="4.3"/>
<line x1="379.4" y1="407.9" x2="383.0" y2="417.8" stroke="#1f5f5d" stroke-width="0.8"/>
<line x1="383.0" y1="417.8" x2="383.0" y2="457.8" stroke="#2d7f7b" stroke-width="4.4"/>
<line x1="383.0" y1="417.8" x2="383.0" y2="457.8" stroke="#1f5f5d" stroke-width="0.8"/>
<circle cx="229.5" cy="278.8" r="1.1" fill="#8a86d8"/>
<circle cx="347.0" cy="335.0" r="1.1" fill="#8a86d8"/>
<circle cx="193.5" cy="327.0" r="1.1" fill="#8a86d8"/>
<circle cx="383.0" cy="417.8" r="1.1" fill="#8a86d8"/>
<rect x="191.0" y="367.0" width="5" height="2.4" fill="#7a4a3a"/>
<rect x="380.5" y="457.8" width="5" height="2.4" fill="#7a4a3a"/>
<circle cx="365.8" cy="376.0" r="0.8" fill="#c8642a"/>
<circle cx="319.3" cy="310.6" r="0.8" fill="#c8642a"/>
<circle cx="210.7" cy="301.8" r="0.8" fill="#c8642a"/>
<circle cx="257.2" cy="280.8" r="0.8" fill="#c8642a"/>
<circle cx="378.8" cy="407.8" r="0.8" fill="#c8642a"/>
<circle cx="197.7" cy="321.0" r="0.8" fill="#c8642a"/>
<circle cx="341.3" cy="330.3" r="0.8" fill="#c8642a"/>
<circle cx="351.3" cy="345.1" r="0.8" fill="#c8642a"/>
<circle cx="235.2" cy="279.5" r="0.8" fill="#c8642a"/>
<circle cx="225.2" cy="284.7" r="0.8" fill="#c8642a"/>
<line x1="244.1" y1="346.4" x2="244.1" y2="306.4" stroke="#2d7f7b" stroke-width="3.3"/>
<line x1="244.1" y1="346.4" x2="244.1" y2="306.4" stroke="#103c3a" stroke-width="1.2"/>
<line x1="244.1" y1="306.4" x2="247.7" y2="299.9" stroke="#2d7f7b" stroke-width="2.7"/>
<line x1="244.1" y1="306.4" x2="247.7" y2="299.9" stroke="#1f5f5d" stroke-width="0.8"/>
<line x1="247.7" y1="299.9" x2="280.1" y2="258.2" stroke="#2d7f7b" stroke-width="2.1"/>
<line x1="247.7" y1="299.9" x2="280.1" y2="258.2" stroke="#1f5f5d" stroke-width="0.8"/>
<line x1="280.1" y1="258.2" x2="338.8" y2="262.8" stroke="#2d7f7b" stroke-width="2.2"/>
<line x1="280.1" y1="258.2" x2="338.8" y2="262.8" stroke="#1f5f5d" stroke-width="0.8"/>
<line x1="338.8" y1="262.8" x2="397.5" y2="314.4" stroke="#2d7f7b" stroke-width="3.9"/>
<line x1="338.8" y1="262.8" x2="397.5" y2="314.4" stroke="#1f5f5d" stroke-width="0.8"/>
<line x1="397.5" y1="314.4" x2="429.9" y2="387.3" stroke="#2d7f7b" stroke-width="4.3"/>
<line x1="397.5" y1="314.4" x2="429.9" y2="387.3" stroke="#1f5f5d" stroke-width="0.8"/>
<line x1="429.9" y1="387.3" x2="433.6" y2="397.2" stroke="#2d7f7b" stroke-width="4.3"/>
<line x1="429.9" y1="387.3" x2="433.6" y2="397.2" stroke="#1f5f5d" stroke-width="0.8"/>
<line x1="433.6" y1="397.2" x2="433.6" y2="437.2" stroke="#2d7f7b" stroke-width="4.4"/>
<line x1="433.6" y1="397.2" x2="433.6" y2="437.2" stroke="#1f5f5d" stroke-width="0.8"/>
<circle cx="280.1" cy="258.2" r="1.1" fill="#8a86d8"/>
<circle cx="397.5" cy="314.4" r="1.1" fill="#8a86d8"/>
<circle cx="244.1" cy="306.4" r="1.1" fill="#8a86d8"/>
<circle cx="433.6" cy="397.2" r="1.1" fill="#8a86d8"/>
<rect x="241.6" y="346.4" width="5" height="2.4" fill="#7a4a3a"/>
<rect x="431.1" y="437.2" width="5" height="2.4" fill="#7a4a3a"/>
<circle cx="416.3" cy="355.4" r="0.8" fill="#c8642a"/>
<circle cx="369.9" cy="290.0" r="0.8" fill="#c8642a"/>
<circle cx="261.3" cy="281.2" r="0.8" fill="#c8642a"/>
<circle cx="307.7" cy="260.2" r="0.8" fill="#c8642a"/>
<circle cx="429.4" cy="387.2" r="0.8" fill="#c8642a"/>
<circle cx="248.2" cy="300.4" r="0.8" fill="#c8642a"/>
<circle cx="391.9" cy="309.7" r="0.8" fill="#c8642a"/>
<circle cx="401.8" cy="324.5" r="0.8" fill="#c8642a"/>
<circle cx="285.7" cy="258.9" r="0.8" fill="#c8642a"/>
<circle cx="275.8" cy="264.1" r="0.8" fill="#c8642a"/>
<line x1="294.6" y1="325.8" x2="294.6" y2="285.8" stroke="#2d7f7b" stroke-width="3.3"/>
<line x1="294.6" y1="325.8" x2="294.6" y2="285.8" stroke="#103c3a" stroke-width="1.2"/>
<line x1="294.6" y1="285.8" x2="298.2" y2="279.3" stroke="#2d7f7b" stroke-width="2.7"/>
<line x1="294.6" y1="285.8" x2="298.2" y2="279.3" stroke="#1f5f5d" stroke-width="0.8"/>
<line x1="298.2" y1="279.3" x2="330.6" y2="237.6" stroke="#2d7f7b" stroke-width="2.1"/>
<line x1="298.2" y1="279.3" x2="330.6" y2="237.6" stroke="#1f5f5d" stroke-width="0.8"/>
<line x1="330.6" y1="237.6" x2="389.4" y2="242.2" stroke="#2d7f7b" stroke-width="2.2"/>
<line x1="330.6" y1="237.6" x2="389.4" y2="242.2" stroke="#1f5f5d" stroke-width="0.8"/>
<line x1="389.4" y1="242.2" x2="448.1" y2="293.8" stroke="#2d7f7b" stroke-width="3.9"/>
<line x1="389.4" y1="242.2" x2="448.1" y2="293.8" stroke="#1f5f5d" stroke-width="0.8"/>
<line x1="448.1" y1="293.8" x2="480.5" y2="366.7" stroke="#2d7f7b" stroke-width="4.3"/>
<line x1="448.1" y1="293.8" x2="480.5" y2="366.7" stroke="#1f5f5d" stroke-width="0.8"/>
<line x1="480.5" y1="366.7" x2="484.1" y2="376.6" stroke="#2d7f7b" stroke-width="4.3"/>
<line x1="480.5" y1="366.7" x2="484.1" y2="376.6" stroke="#1f5f5d" stroke-width="0.8"/>
<line x1="484.1" y1="376.6" x2="484.1" y2="416.6" stroke="#2d7f7b" stroke-width="4.4"/>
<line x1="484.1" y1="376.6" x2="484.1" y2="416.6" stroke="#1f5f5d" stroke-width="0.8"/>
<circle cx="330.6" cy="237.6" r="1.1" fill="#8a86d8"/>
<circle cx="448.1" cy="293.8" r="1.1" fill="#8a86d8"/>
<circle cx="294.6" cy="285.8" r="1.1" fill="#8a86d8"/>
<circle cx="484.1" cy="376.6" r="1.1" fill="#8a86d8"/>
<rect x="292.1" y="325.8" width="5" height="2.4" fill="#7a4a3a"/>
<rect x="481.6" y="416.6" width="5" height="2.4" fill="#7a4a3a"/>
<circle cx="466.9" cy="334.8" r="0.8" fill="#c8642a"/>
<circle cx="420.4" cy="269.4" r="0.8" fill="#c8642a"/>
<circle cx="311.8" cy="260.6" r="0.8" fill="#c8642a"/>
<circle cx="358.3" cy="239.6" r="0.8" fill="#c8642a"/>
<circle cx="479.9" cy="366.6" r="0.8" fill="#c8642a"/>
<circle cx="298.8" cy="279.8" r="0.8" fill="#c8642a"/>
<circle cx="442.4" cy="289.1" r="0.8" fill="#c8642a"/>
<circle cx="452.4" cy="303.9" r="0.8" fill="#c8642a"/>
<circle cx="336.3" cy="238.3" r="0.8" fill="#c8642a"/>
<circle cx="326.3" cy="243.5" r="0.8" fill="#c8642a"/>
<line x1="345.1" y1="305.2" x2="345.1" y2="265.2" stroke="#2d7f7b" stroke-width="3.3"/>
<line x1="345.1" y1="305.2" x2="345.1" y2="265.2" stroke="#103c3a" stroke-width="1.2"/>
<line x1="345.1" y1="265.2" x2="348.8" y2="258.7" stroke="#2d7f7b" stroke-width="2.7"/>
<line x1="345.1" y1="265.2" x2="348.8" y2="258.7" stroke="#1f5f5d" stroke-width="0.8"/>
<line x1="348.8" y1="258.7" x2="381.2" y2="217.0" stroke="#2d7f7b" stroke-width="2.1"/>
<line x1="348.8" y1="258.7" x2="381.2" y2="217.0" stroke="#1f5f5d" stroke-width="0.8"/>
<line x1="381.2" y1="217.0" x2="439.9" y2="221.6" stroke="#2d7f7b" stroke-width="2.2"/>
<line x1="381.2" y1="217.0" x2="439.9" y2="221.6" stroke="#1f5f5d" stroke-width="0.8"/>
<line x1="439.9" y1="221.6" x2="498.6" y2="273.2" stroke="#2d7f7b" stroke-width="3.9"/>
<line x1="439.9" y1="221.6" x2="498.6" y2="273.2" stroke="#1f5f5d" stroke-width="0.8"/>
<line x1="498.6" y1="273.2" x2="531.0" y2="346.1" stroke="#2d7f7b" stroke-width="4.3"/>
<line x1="498.6" y1="273.2" x2="531.0" y2="346.1" stroke="#1f5f5d" stroke-width="0.8"/>
<line x1="531.0" y1="346.1" x2="534.6" y2="356.0" stroke="#2d7f7b" stroke-width="4.3"/>
<line x1="531.0" y1="346.1" x2="534.6" y2="356.0" stroke="#1f5f5d" stroke-width="0.8"/>
<line x1="534.6" y1="356.0" x2="534.6" y2="396.0" stroke="#2d7f7b" stroke-width="4.4"/>
<line x1="534.6" y1="356.0" x2="534.6" y2="396.0" stroke="#1f5f5d" stroke-width="0.8"/>
<circle cx="381.2" cy="217.0" r="1.1" fill="#8a86d8"/>
<circle cx="498.6" cy="273.2" r="1.1" fill="#8a86d8"/>
<circle cx="345.1" cy="265.2" r="1.1" fill="#8a86d8"/>
<circle cx="534.6" cy="356.0" r="1.1" fill="#8a86d8"/>
<rect x="342.6" y="305.2" width="5" height="2.4" fill="#7a4a3a"/>
<rect x="532.1" y="396.0" width="5" height="2.4" fill="#7a4a3a"/>
<circle cx="517.4" cy="314.2" r="0.8" fill="#c8642a"/>
<circle cx="471.0" cy="248.8" r="0.8" fill="#c8642a"/>
<circle cx="362.4" cy="240.0" r="0.8" fill="#c8642a"/>
<circle cx="408.8" cy="219.0" r="0.8" fill="#c8642a"/>
<circle cx="530.5" cy="346.0" r="0.8" fill="#c8642a"/>
<circle cx="349.3" cy="259.2" r="0.8" fill="#c8642a"/>
<circle cx="493.0" cy="268.5" r="0.8" fill="#c8642a"/>
<circle cx="502.9" cy="283.3" r="0.8" fill="#c8642a"/>
<circle cx="386.8" cy="217.7" r="0.8" fill="#c8642a"/>
<circle cx="376.9" cy="222.9" r="0.8" fill="#c8642a"/>
<line x1="395.7" y1="284.6" x2="395.7" y2="244.6" stroke="#2d7f7b" stroke-width="3.3"/>
<line x1="395.7" y1="284.6" x2="395.7" y2="244.6" stroke="#103c3a" stroke-width="1.2"/>
<line x1="395.7" y1="244.6" x2="399.3" y2="238.1" stroke="#2d7f7b" stroke-width="2.7"/>
<line x1="395.7" y1="244.6" x2="399.3" y2="238.1" stroke="#1f5f5d" stroke-width="0.8"/>
<line x1="399.3" y1="238.1" x2="431.7" y2="196.4" stroke="#2d7f7b" stroke-width="2.1"/>
<line x1="399.3" y1="238.1" x2="431.7" y2="196.4" stroke="#1f5f5d" stroke-width="0.8"/>
<line x1="431.7" y1="196.4" x2="490.4" y2="201.0" stroke="#2d7f7b" stroke-width="2.2"/>
<line x1="431.7" y1="196.4" x2="490.4" y2="201.0" stroke="#1f5f5d" stroke-width="0.8"/>
<line x1="490.4" y1="201.0" x2="549.2" y2="252.6" stroke="#2d7f7b" stroke-width="3.9"/>
<line x1="490.4" y1="201.0" x2="549.2" y2="252.6" stroke="#1f5f5d" stroke-width="0.8"/>
<line x1="549.2" y1="252.6" x2="581.6" y2="325.5" stroke="#2d7f7b" stroke-width="4.3"/>
<line x1="549.2" y1="252.6" x2="581.6" y2="325.5" stroke="#1f5f5d" stroke-width="0.8"/>
<line x1="581.6" y1="325.5" x2="585.2" y2="335.4" stroke="#2d7f7b" stroke-width="4.3"/>
<line x1="581.6" y1="325.5" x2="585.2" y2="335.4" stroke="#1f5f5d" stroke-width="0.8"/>
<line x1="585.2" y1="335.4" x2="585.2" y2="375.4" stroke="#2d7f7b" stroke-width="4.4"/>
<line x1="585.2" y1="335.4" x2="585.2" y2="375.4" stroke="#1f5f5d" stroke-width="0.8"/>
<circle cx="431.7" cy="196.4" r="1.1" fill="#8a86d8"/>
<circle cx="549.2" cy="252.6" r="1.1" fill="#8a86d8"/>
<circle cx="395.7" cy="244.6" r="1.1" fill="#8a86d8"/>
<circle cx="585.2" cy="335.4" r="1.1" fill="#8a86d8"/>
<rect x="393.2" y="284.6" width="5" height="2.4" fill="#7a4a3a"/>
<rect x="582.7" y="375.4" width="5" height="2.4" fill="#7a4a3a"/>
<circle cx="568.0" cy="293.6" r="0.8" fill="#c8642a"/>
<circle cx="521.5" cy="228.2" r="0.8" fill="#c8642a"/>
<circle cx="412.9" cy="219.4" r="0.8" fill="#c8642a"/>
<circle cx="459.4" cy="198.4" r="0.8" fill="#c8642a"/>
<circle cx="581.0" cy="325.4" r="0.8" fill="#c8642a"/>
<circle cx="399.9" cy="238.6" r="0.8" fill="#c8642a"/>
<circle cx="543.5" cy="247.9" r="0.8" fill="#c8642a"/>
<circle cx="553.5" cy="262.7" r="0.8" fill="#c8642a"/>
<circle cx="437.4" cy="197.1" r="0.8" fill="#c8642a"/>
<circle cx="427.4" cy="202.3" r="0.8" fill="#c8642a"/>
<line x1="446.2" y1="264.0" x2="446.2" y2="224.0" stroke="#2d7f7b" stroke-width="3.3"/>
<line x1="446.2" y1="264.0" x2="446.2" y2="224.0" stroke="#103c3a" stroke-width="1.2"/>
<line x1="446.2" y1="224.0" x2="449.9" y2="217.5" stroke="#2d7f7b" stroke-width="2.7"/>
<line x1="446.2" y1="224.0" x2="449.9" y2="217.5" stroke="#1f5f5d" stroke-width="0.8"/>
<line x1="449.9" y1="217.5" x2="482.3" y2="175.8" stroke="#2d7f7b" stroke-width="2.1"/>
<line x1="449.9" y1="217.5" x2="482.3" y2="175.8" stroke="#1f5f5d" stroke-width="0.8"/>
<line x1="482.3" y1="175.8" x2="541.0" y2="180.4" stroke="#2d7f7b" stroke-width="2.2"/>
<line x1="482.3" y1="175.8" x2="541.0" y2="180.4" stroke="#1f5f5d" stroke-width="0.8"/>
<line x1="541.0" y1="180.4" x2="599.7" y2="232.0" stroke="#2d7f7b" stroke-width="3.9"/>
<line x1="541.0" y1="180.4" x2="599.7" y2="232.0" stroke="#1f5f5d" stroke-width="0.8"/>
<line x1="599.7" y1="232.0" x2="632.1" y2="304.9" stroke="#2d7f7b" stroke-width="4.3"/>
<line x1="599.7" y1="232.0" x2="632.1" y2="304.9" stroke="#1f5f5d" stroke-width="0.8"/>
<line x1="632.1" y1="304.9" x2="635.8" y2="314.8" stroke="#2d7f7b" stroke-width="4.3"/>
<line x1="632.1" y1="304.9" x2="635.8" y2="314.8" stroke="#1f5f5d" stroke-width="0.8"/>
<line x1="635.8" y1="314.8" x2="635.8" y2="354.8" stroke="#2d7f7b" stroke-width="4.4"/>
<line x1="635.8" y1="314.8" x2="635.8" y2="354.8" stroke="#1f5f5d" stroke-width="0.8"/>
<circle cx="482.3" cy="175.8" r="1.1" fill="#8a86d8"/>
<circle cx="599.7" cy="232.0" r="1.1" fill="#8a86d8"/>
<circle cx="446.2" cy="224.0" r="1.1" fill="#8a86d8"/>
<circle cx="635.8" cy="314.8" r="1.1" fill="#8a86d8"/>
<rect x="443.8" y="264.0" width="5" height="2.4" fill="#7a4a3a"/>
<rect x="633.2" y="354.8" width="5" height="2.4" fill="#7a4a3a"/>
<circle cx="618.5" cy="273.0" r="0.8" fill="#c8642a"/>
<circle cx="572.1" cy="207.6" r="0.8" fill="#c8642a"/>
<circle cx="463.5" cy="198.8" r="0.8" fill="#c8642a"/>
<circle cx="509.9" cy="177.8" r="0.8" fill="#c8642a"/>
<circle cx="631.6" cy="304.8" r="0.8" fill="#c8642a"/>
<circle cx="450.4" cy="218.0" r="0.8" fill="#c8642a"/>
<circle cx="594.1" cy="227.3" r="0.8" fill="#c8642a"/>
<circle cx="604.0" cy="242.1" r="0.8" fill="#c8642a"/>
<circle cx="487.9" cy="176.5" r="0.8" fill="#c8642a"/>
<circle cx="478.0" cy="181.7" r="0.8" fill="#c8642a"/>
<line x1="496.8" y1="243.4" x2="496.8" y2="203.4" stroke="#2d7f7b" stroke-width="3.3"/>
<line x1="496.8" y1="243.4" x2="496.8" y2="203.4" stroke="#103c3a" stroke-width="1.2"/>
<line x1="496.8" y1="203.4" x2="500.4" y2="196.9" stroke="#2d7f7b" stroke-width="2.7"/>
<line x1="496.8" y1="203.4" x2="500.4" y2="196.9" stroke="#1f5f5d" stroke-width="0.8"/>
<line x1="500.4" y1="196.9" x2="532.8" y2="155.2" stroke="#2d7f7b" stroke-width="2.1"/>
<line x1="500.4" y1="196.9" x2="532.8" y2="155.2" stroke="#1f5f5d" stroke-width="0.8"/>
<line x1="532.8" y1="155.2" x2="591.5" y2="159.8" stroke="#2d7f7b" stroke-width="2.2"/>
<line x1="532.8" y1="155.2" x2="591.5" y2="159.8" stroke="#1f5f5d" stroke-width="0.8"/>
<line x1="591.5" y1="159.8" x2="650.3" y2="211.4" stroke="#2d7f7b" stroke-width="3.9"/>
<line x1="591.5" y1="159.8" x2="650.3" y2="211.4" stroke="#1f5f5d" stroke-width="0.8"/>
<line x1="650.3" y1="211.4" x2="682.7" y2="284.3" stroke="#2d7f7b" stroke-width="4.3"/>
<line x1="650.3" y1="211.4" x2="682.7" y2="284.3" stroke="#1f5f5d" stroke-width="0.8"/>
<line x1="682.7" y1="284.3" x2="686.3" y2="294.2" stroke="#2d7f7b" stroke-width="4.3"/>
<line x1="682.7" y1="284.3" x2="686.3" y2="294.2" stroke="#1f5f5d" stroke-width="0.8"/>
<line x1="686.3" y1="294.2" x2="686.3" y2="334.2" stroke="#2d7f7b" stroke-width="4.4"/>
<line x1="686.3" y1="294.2" x2="686.3" y2="334.2" stroke="#1f5f5d" stroke-width="0.8"/>
<circle cx="532.8" cy="155.2" r="1.1" fill="#8a86d8"/>
<circle cx="650.3" cy="211.4" r="1.1" fill="#8a86d8"/>
<circle cx="496.8" cy="203.4" r="1.1" fill="#8a86d8"/>
<circle cx="686.3" cy="294.2" r="1.1" fill="#8a86d8"/>
<rect x="494.3" y="243.4" width="5" height="2.4" fill="#7a4a3a"/>
<rect x="683.8" y="334.2" width="5" height="2.4" fill="#7a4a3a"/>
<circle cx="669.1" cy="252.4" r="0.8" fill="#c8642a"/>
<circle cx="622.6" cy="187.0" r="0.8" fill="#c8642a"/>
<circle cx="514.0" cy="178.2" r="0.8" fill="#c8642a"/>
<circle cx="560.5" cy="157.2" r="0.8" fill="#c8642a"/>
<circle cx="682.1" cy="284.2" r="0.8" fill="#c8642a"/>
<circle cx="501.0" cy="197.4" r="0.8" fill="#c8642a"/>
<circle cx="644.6" cy="206.7" r="0.8" fill="#c8642a"/>
<circle cx="654.6" cy="221.5" r="0.8" fill="#c8642a"/>
<circle cx="538.5" cy="155.9" r="0.8" fill="#c8642a"/>
<circle cx="528.5" cy="161.1" r="0.8" fill="#c8642a"/>
<line x1="547.3" y1="222.8" x2="547.3" y2="182.8" stroke="#2d7f7b" stroke-width="3.3"/>
<line x1="547.3" y1="222.8" x2="547.3" y2="182.8" stroke="#103c3a" stroke-width="1.2"/>
<line x1="547.3" y1="182.8" x2="551.0" y2="176.3" stroke="#2d7f7b" stroke-width="2.7"/>
<line x1="547.3" y1="182.8" x2="551.0" y2="176.3" stroke="#1f5f5d" stroke-width="0.8"/>
<line x1="551.0" y1="176.3" x2="583.4" y2="134.6" stroke="#2d7f7b" stroke-width="2.1"/>
<line x1="551.0" y1="176.3" x2="583.4" y2="134.6" stroke="#1f5f5d" stroke-width="0.8"/>
<line x1="583.4" y1="134.6" x2="642.1" y2="139.2" stroke="#2d7f7b" stroke-width="2.2"/>
<line x1="583.4" y1="134.6" x2="642.1" y2="139.2" stroke="#1f5f5d" stroke-width="0.8"/>
<line x1="642.1" y1="139.2" x2="700.8" y2="190.8" stroke="#2d7f7b" stroke-width="3.9"/>
<line x1="642.1" y1="139.2" x2="700.8" y2="190.8" stroke="#1f5f5d" stroke-width="0.8"/>
<line x1="700.8" y1="190.8" x2="733.2" y2="263.7" stroke="#2d7f7b" stroke-width="4.3"/>
<line x1="700.8" y1="190.8" x2="733.2" y2="263.7" stroke="#1f5f5d" stroke-width="0.8"/>
<line x1="733.2" y1="263.7" x2="736.8" y2="273.6" stroke="#2d7f7b" stroke-width="4.3"/>
<line x1="733.2" y1="263.7" x2="736.8" y2="273.6" stroke="#1f5f5d" stroke-width="0.8"/>
<line x1="736.8" y1="273.6" x2="736.8" y2="313.6" stroke="#2d7f7b" stroke-width="4.4"/>
<line x1="736.8" y1="273.6" x2="736.8" y2="313.6" stroke="#1f5f5d" stroke-width="0.8"/>
<circle cx="583.4" cy="134.6" r="1.1" fill="#8a86d8"/>
<circle cx="700.8" cy="190.8" r="1.1" fill="#8a86d8"/>
<circle cx="547.3" cy="182.8" r="1.1" fill="#8a86d8"/>
<circle cx="736.8" cy="273.6" r="1.1" fill="#8a86d8"/>
<rect x="544.8" y="222.8" width="5" height="2.4" fill="#7a4a3a"/>
<rect x="734.3" y="313.6" width="5" height="2.4" fill="#7a4a3a"/>
<circle cx="719.6" cy="231.8" r="0.8" fill="#c8642a"/>
<circle cx="673.2" cy="166.4" r="0.8" fill="#c8642a"/>
<circle cx="564.6" cy="157.6" r="0.8" fill="#c8642a"/>
<circle cx="611.0" cy="136.6" r="0.8" fill="#c8642a"/>
<circle cx="732.7" cy="263.6" r="0.8" fill="#c8642a"/>
<circle cx="551.5" cy="176.8" r="0.8" fill="#c8642a"/>
<circle cx="695.2" cy="186.1" r="0.8" fill="#c8642a"/>
<circle cx="705.1" cy="200.9" r="0.8" fill="#c8642a"/>
<circle cx="589.0" cy="135.3" r="0.8" fill="#c8642a"/>
<circle cx="579.1" cy="140.5" r="0.8" fill="#c8642a"/>
<line x1="597.9" y1="202.2" x2="597.9" y2="162.2" stroke="#2d7f7b" stroke-width="3.3"/>
<line x1="597.9" y1="202.2" x2="597.9" y2="162.2" stroke="#103c3a" stroke-width="1.2"/>
<line x1="597.9" y1="162.2" x2="601.5" y2="155.7" stroke="#2d7f7b" stroke-width="2.7"/>
<line x1="597.9" y1="162.2" x2="601.5" y2="155.7" stroke="#1f5f5d" stroke-width="0.8"/>
<line x1="601.5" y1="155.7" x2="633.9" y2="114.0" stroke="#2d7f7b" stroke-width="2.1"/>
<line x1="601.5" y1="155.7" x2="633.9" y2="114.0" stroke="#1f5f5d" stroke-width="0.8"/>
<line x1="633.9" y1="114.0" x2="692.6" y2="118.6" stroke="#2d7f7b" stroke-width="2.2"/>
<line x1="633.9" y1="114.0" x2="692.6" y2="118.6" stroke="#1f5f5d" stroke-width="0.8"/>
<line x1="692.6" y1="118.6" x2="751.4" y2="170.2" stroke="#2d7f7b" stroke-width="3.9"/>
<line x1="692.6" y1="118.6" x2="751.4" y2="170.2" stroke="#1f5f5d" stroke-width="0.8"/>
<line x1="751.4" y1="170.2" x2="783.8" y2="243.1" stroke="#2d7f7b" stroke-width="4.3"/>
<line x1="751.4" y1="170.2" x2="783.8" y2="243.1" stroke="#1f5f5d" stroke-width="0.8"/>
<line x1="783.8" y1="243.1" x2="787.4" y2="253.0" stroke="#2d7f7b" stroke-width="4.3"/>
<line x1="783.8" y1="243.1" x2="787.4" y2="253.0" stroke="#1f5f5d" stroke-width="0.8"/>
<line x1="787.4" y1="253.0" x2="787.4" y2="293.0" stroke="#2d7f7b" stroke-width="4.4"/>
<line x1="787.4" y1="253.0" x2="787.4" y2="293.0" stroke="#1f5f5d" stroke-width="0.8"/>
<circle cx="633.9" cy="114.0" r="1.1" fill="#8a86d8"/>
<circle cx="751.4" cy="170.2" r="1.1" fill="#8a86d8"/>
<circle cx="597.9" cy="162.2" r="1.1" fill="#8a86d8"/>
<circle cx="787.4" cy="253.0" r="1.1" fill="#8a86d8"/>
<rect x="595.4" y="202.2" width="5" height="2.4" fill="#7a4a3a"/>
<rect x="784.9" y="293.0" width="5" height="2.4" fill="#7a4a3a"/>
<circle cx="770.2" cy="211.2" r="0.8" fill="#c8642a"/>
<circle cx="723.7" cy="145.8" r="0.8" fill="#c8642a"/>
<circle cx="615.1" cy="137.0" r="0.8" fill="#c8642a"/>
<circle cx="661.6" cy="116.0" r="0.8" fill="#c8642a"/>
<circle cx="783.2" cy="243.0" r="0.8" fill="#c8642a"/>
<circle cx="602.1" cy="156.2" r="0.8" fill="#c8642a"/>
<circle cx="745.7" cy="165.5" r="0.8" fill="#c8642a"/>
<circle cx="755.7" cy="180.3" r="0.8" fill="#c8642a"/>
<circle cx="639.6" cy="114.7" r="0.8" fill="#c8642a"/>
<circle cx="629.6" cy="119.9" r="0.8" fill="#c8642a"/>
<line x1="648.5" y1="181.6" x2="648.5" y2="141.6" stroke="#2d7f7b" stroke-width="3.3"/>
<line x1="648.5" y1="181.6" x2="648.5" y2="141.6" stroke="#103c3a" stroke-width="1.2"/>
<line x1="648.5" y1="141.6" x2="652.1" y2="135.1" stroke="#2d7f7b" stroke-width="2.7"/>
<line x1="648.5" y1="141.6" x2="652.1" y2="135.1" stroke="#1f5f5d" stroke-width="0.8"/>
<line x1="652.1" y1="135.1" x2="684.5" y2="93.4" stroke="#2d7f7b" stroke-width="2.1"/>
<line x1="652.1" y1="135.1" x2="684.5" y2="93.4" stroke="#1f5f5d" stroke-width="0.8"/>
<line x1="684.5" y1="93.4" x2="743.2" y2="98.0" stroke="#2d7f7b" stroke-width="2.2"/>
<line x1="684.5" y1="93.4" x2="743.2" y2="98.0" stroke="#1f5f5d" stroke-width="0.8"/>
<line x1="743.2" y1="98.0" x2="801.9" y2="149.6" stroke="#2d7f7b" stroke-width="3.9"/>
<line x1="743.2" y1="98.0" x2="801.9" y2="149.6" stroke="#1f5f5d" stroke-width="0.8"/>
<line x1="801.9" y1="149.6" x2="834.3" y2="222.5" stroke="#2d7f7b" stroke-width="4.3"/>
<line x1="801.9" y1="149.6" x2="834.3" y2="222.5" stroke="#1f5f5d" stroke-width="0.8"/>
<line x1="834.3" y1="222.5" x2="838.0" y2="232.4" stroke="#2d7f7b" stroke-width="4.3"/>
<line x1="834.3" y1="222.5" x2="838.0" y2="232.4" stroke="#1f5f5d" stroke-width="0.8"/>
<line x1="838.0" y1="232.4" x2="838.0" y2="272.4" stroke="#2d7f7b" stroke-width="4.4"/>
<line x1="838.0" y1="232.4" x2="838.0" y2="272.4" stroke="#1f5f5d" stroke-width="0.8"/>
<circle cx="684.5" cy="93.4" r="1.1" fill="#8a86d8"/>
<circle cx="801.9" cy="149.6" r="1.1" fill="#8a86d8"/>
<circle cx="648.5" cy="141.6" r="1.1" fill="#8a86d8"/>
<circle cx="838.0" cy="232.4" r="1.1" fill="#8a86d8"/>
<rect x="646.0" y="181.6" width="5" height="2.4" fill="#7a4a3a"/>
<rect x="835.5" y="272.4" width="5" height="2.4" fill="#7a4a3a"/>
<circle cx="820.7" cy="190.6" r="0.8" fill="#c8642a"/>
<circle cx="774.3" cy="125.2" r="0.8" fill="#c8642a"/>
<circle cx="665.7" cy="116.4" r="0.8" fill="#c8642a"/>
<circle cx="712.1" cy="95.4" r="0.8" fill="#c8642a"/>
<circle cx="833.8" cy="222.4" r="0.8" fill="#c8642a"/>
<circle cx="652.6" cy="135.6" r="0.8" fill="#c8642a"/>
<circle cx="796.3" cy="144.9" r="0.8" fill="#c8642a"/>
<circle cx="806.2" cy="159.7" r="0.8" fill="#c8642a"/>
<circle cx="690.1" cy="94.1" r="0.8" fill="#c8642a"/>
<circle cx="680.2" cy="99.3" r="0.8" fill="#c8642a"/>
<line x1="699.0" y1="161.0" x2="699.0" y2="121.0" stroke="#2d7f7b" stroke-width="3.3"/>
<line x1="699.0" y1="161.0" x2="699.0" y2="121.0" stroke="#0c2a29" stroke-width="1.6"/>
<line x1="699.0" y1="121.0" x2="702.6" y2="114.5" stroke="#2d7f7b" stroke-width="2.7"/>
<line x1="699.0" y1="121.0" x2="702.6" y2="114.5" stroke="#0c2a29" stroke-width="1.0"/>
<line x1="702.6" y1="114.5" x2="735.0" y2="72.8" stroke="#2d7f7b" stroke-width="2.2"/>
<line x1="735.0" y1="72.8" x2="793.8" y2="77.4" stroke="#2d7f7b" stroke-width="2.8"/>
<line x1="735.0" y1="72.8" x2="793.8" y2="77.4" stroke="#0c2a29" stroke-width="1.1"/>
<line x1="793.8" y1="77.4" x2="852.5" y2="129.0" stroke="#2d7f7b" stroke-width="3.9"/>
<line x1="793.8" y1="77.4" x2="852.5" y2="129.0" stroke="#0c2a29" stroke-width="2.2"/>
<line x1="852.5" y1="129.0" x2="884.9" y2="201.9" stroke="#2d7f7b" stroke-width="4.2"/>
<line x1="852.5" y1="129.0" x2="884.9" y2="201.9" stroke="#0c2a29" stroke-width="2.5"/>
<line x1="884.9" y1="201.9" x2="888.5" y2="211.8" stroke="#2d7f7b" stroke-width="4.3"/>
<line x1="884.9" y1="201.9" x2="888.5" y2="211.8" stroke="#0c2a29" stroke-width="2.6"/>
<line x1="888.5" y1="211.8" x2="888.5" y2="251.8" stroke="#2d7f7b" stroke-width="4.4"/>
<line x1="888.5" y1="211.8" x2="888.5" y2="251.8" stroke="#0c2a29" stroke-width="2.7"/>
<circle cx="735.0" cy="72.8" r="1.1" fill="#8a86d8"/>
<circle cx="852.5" cy="129.0" r="1.1" fill="#8a86d8"/>
<circle cx="699.0" cy="121.0" r="1.1" fill="#8a86d8"/>
<circle cx="888.5" cy="211.8" r="1.1" fill="#8a86d8"/>
<rect x="696.5" y="161.0" width="5" height="2.4" fill="#7a4a3a"/>
<rect x="886.0" y="251.8" width="5" height="2.4" fill="#7a4a3a"/>
<circle cx="871.3" cy="170.0" r="0.8" fill="#c8642a"/>
<circle cx="824.8" cy="104.6" r="0.8" fill="#c8642a"/>
<circle cx="716.2" cy="95.8" r="0.8" fill="#c8642a"/>
<circle cx="762.7" cy="74.8" r="0.8" fill="#c8642a"/>
<circle cx="884.3" cy="201.8" r="0.8" fill="#c8642a"/>
<circle cx="703.2" cy="115.0" r="0.8" fill="#c8642a"/>
<circle cx="846.8" cy="124.3" r="0.8" fill="#c8642a"/>
<circle cx="856.8" cy="139.1" r="0.8" fill="#c8642a"/>
<circle cx="740.7" cy="73.5" r="0.8" fill="#c8642a"/>
<circle cx="730.7" cy="78.7" r="0.8" fill="#c8642a"/>
<circle cx="408.3" cy="419.2" r="0.8" fill="#c8642a"/>
<circle cx="218.8" cy="328.4" r="0.8" fill="#c8642a"/>
<circle cx="404.1" cy="397.5" r="0.8" fill="#c8642a"/>
<circle cx="222.9" cy="310.7" r="0.8" fill="#c8642a"/>
<circle cx="376.5" cy="334.8" r="0.8" fill="#c8642a"/>
<circle cx="250.5" cy="274.4" r="0.8" fill="#c8642a"/>
<circle cx="366.6" cy="320.0" r="0.8" fill="#c8642a"/>
<circle cx="260.5" cy="269.2" r="0.8" fill="#c8642a"/>
<circle cx="323.0" cy="281.3" r="0.8" fill="#c8642a"/>
<circle cx="304.0" cy="272.3" r="0.8" fill="#c8642a"/>
<circle cx="458.8" cy="398.6" r="0.8" fill="#c8642a"/>
<circle cx="269.3" cy="307.8" r="0.8" fill="#c8642a"/>
<circle cx="454.7" cy="376.9" r="0.8" fill="#c8642a"/>
<circle cx="273.5" cy="290.1" r="0.8" fill="#c8642a"/>
<circle cx="427.1" cy="314.2" r="0.8" fill="#c8642a"/>
<circle cx="301.1" cy="253.8" r="0.8" fill="#c8642a"/>
<circle cx="417.1" cy="299.4" r="0.8" fill="#c8642a"/>
<circle cx="311.0" cy="248.6" r="0.8" fill="#c8642a"/>
<circle cx="373.6" cy="260.7" r="0.8" fill="#c8642a"/>
<circle cx="354.6" cy="251.7" r="0.8" fill="#c8642a"/>
<circle cx="509.4" cy="378.0" r="0.8" fill="#c8642a"/>
<circle cx="319.9" cy="287.2" r="0.8" fill="#c8642a"/>
<circle cx="505.2" cy="356.3" r="0.8" fill="#c8642a"/>
<circle cx="324.0" cy="269.5" r="0.8" fill="#c8642a"/>
<circle cx="477.6" cy="293.6" r="0.8" fill="#c8642a"/>
<circle cx="351.6" cy="233.2" r="0.8" fill="#c8642a"/>
<circle cx="467.7" cy="278.8" r="0.8" fill="#c8642a"/>
<circle cx="361.6" cy="228.0" r="0.8" fill="#c8642a"/>
<circle cx="424.1" cy="240.1" r="0.8" fill="#c8642a"/>
<circle cx="405.1" cy="231.1" r="0.8" fill="#c8642a"/>
<circle cx="559.9" cy="357.4" r="0.8" fill="#c8642a"/>
<circle cx="370.4" cy="266.6" r="0.8" fill="#c8642a"/>
<circle cx="555.8" cy="335.7" r="0.8" fill="#c8642a"/>
<circle cx="374.6" cy="248.9" r="0.8" fill="#c8642a"/>
<circle cx="528.2" cy="273.0" r="0.8" fill="#c8642a"/>
<circle cx="402.2" cy="212.6" r="0.8" fill="#c8642a"/>
<circle cx="518.2" cy="258.2" r="0.8" fill="#c8642a"/>
<circle cx="412.1" cy="207.4" r="0.8" fill="#c8642a"/>
<circle cx="474.6" cy="219.5" r="0.8" fill="#c8642a"/>
<circle cx="455.7" cy="210.5" r="0.8" fill="#c8642a"/>
<circle cx="610.5" cy="336.8" r="0.8" fill="#c8642a"/>
<circle cx="421.0" cy="246.0" r="0.8" fill="#c8642a"/>
<circle cx="606.3" cy="315.1" r="0.8" fill="#c8642a"/>
<circle cx="425.1" cy="228.3" r="0.8" fill="#c8642a"/>
<circle cx="578.7" cy="252.4" r="0.8" fill="#c8642a"/>
<circle cx="452.7" cy="192.0" r="0.8" fill="#c8642a"/>
<circle cx="568.8" cy="237.6" r="0.8" fill="#c8642a"/>
<circle cx="462.7" cy="186.8" r="0.8" fill="#c8642a"/>
<circle cx="525.2" cy="198.9" r="0.8" fill="#c8642a"/>
<circle cx="506.2" cy="189.9" r="0.8" fill="#c8642a"/>
<circle cx="661.0" cy="316.2" r="0.8" fill="#c8642a"/>
<circle cx="471.5" cy="225.4" r="0.8" fill="#c8642a"/>
<circle cx="656.9" cy="294.5" r="0.8" fill="#c8642a"/>
<circle cx="475.7" cy="207.7" r="0.8" fill="#c8642a"/>
<circle cx="629.3" cy="231.8" r="0.8" fill="#c8642a"/>
<circle cx="503.3" cy="171.4" r="0.8" fill="#c8642a"/>
<circle cx="619.3" cy="217.0" r="0.8" fill="#c8642a"/>
<circle cx="513.2" cy="166.2" r="0.8" fill="#c8642a"/>
<circle cx="575.8" cy="178.3" r="0.8" fill="#c8642a"/>
<circle cx="556.8" cy="169.3" r="0.8" fill="#c8642a"/>
<circle cx="711.6" cy="295.6" r="0.8" fill="#c8642a"/>
<circle cx="522.1" cy="204.8" r="0.8" fill="#c8642a"/>
<circle cx="707.4" cy="273.9" r="0.8" fill="#c8642a"/>
<circle cx="526.2" cy="187.1" r="0.8" fill="#c8642a"/>
<circle cx="679.8" cy="211.2" r="0.8" fill="#c8642a"/>
<circle cx="553.8" cy="150.8" r="0.8" fill="#c8642a"/>
<circle cx="669.9" cy="196.4" r="0.8" fill="#c8642a"/>
<circle cx="563.8" cy="145.6" r="0.8" fill="#c8642a"/>
<circle cx="626.3" cy="157.7" r="0.8" fill="#c8642a"/>
<circle cx="607.3" cy="148.7" r="0.8" fill="#c8642a"/>
<circle cx="762.1" cy="275.0" r="0.8" fill="#c8642a"/>
<circle cx="572.6" cy="184.2" r="0.8" fill="#c8642a"/>
<circle cx="758.0" cy="253.3" r="0.8" fill="#c8642a"/>
<circle cx="576.8" cy="166.5" r="0.8" fill="#c8642a"/>
<circle cx="730.4" cy="190.6" r="0.8" fill="#c8642a"/>
<circle cx="604.4" cy="130.2" r="0.8" fill="#c8642a"/>
<circle cx="720.4" cy="175.8" r="0.8" fill="#c8642a"/>
<circle cx="614.3" cy="125.0" r="0.8" fill="#c8642a"/>
<circle cx="676.8" cy="137.1" r="0.8" fill="#c8642a"/>
<circle cx="657.9" cy="128.1" r="0.8" fill="#c8642a"/>
<circle cx="812.7" cy="254.4" r="0.8" fill="#c8642a"/>
<circle cx="623.2" cy="163.6" r="0.8" fill="#c8642a"/>
<circle cx="808.5" cy="232.7" r="0.8" fill="#c8642a"/>
<circle cx="627.3" cy="145.9" r="0.8" fill="#c8642a"/>
<circle cx="780.9" cy="170.0" r="0.8" fill="#c8642a"/>
<circle cx="654.9" cy="109.6" r="0.8" fill="#c8642a"/>
<circle cx="771.0" cy="155.2" r="0.8" fill="#c8642a"/>
<circle cx="664.9" cy="104.4" r="0.8" fill="#c8642a"/>
<circle cx="727.4" cy="116.5" r="0.8" fill="#c8642a"/>
<circle cx="708.5" cy="107.5" r="0.8" fill="#c8642a"/>
<circle cx="863.2" cy="233.8" r="0.8" fill="#c8642a"/>
<circle cx="673.7" cy="143.0" r="0.8" fill="#c8642a"/>
<circle cx="859.1" cy="212.1" r="0.8" fill="#c8642a"/>
<circle cx="677.9" cy="125.3" r="0.8" fill="#c8642a"/>
<circle cx="831.5" cy="149.4" r="0.8" fill="#c8642a"/>
<circle cx="705.5" cy="89.0" r="0.8" fill="#c8642a"/>
<circle cx="821.5" cy="134.6" r="0.8" fill="#c8642a"/>
<circle cx="715.4" cy="83.8" r="0.8" fill="#c8642a"/>
<circle cx="778.0" cy="95.9" r="0.8" fill="#c8642a"/>
<circle cx="759.0" cy="86.9" r="0.8" fill="#c8642a"/>
<line x1="228.5" y1="278.3" x2="230.7" y2="281.8" stroke="#b0a0e0" stroke-width="1.2"/>
<line x1="279.1" y1="257.7" x2="281.3" y2="261.2" stroke="#b0a0e0" stroke-width="1.2"/>
<line x1="329.6" y1="237.1" x2="331.8" y2="240.6" stroke="#b0a0e0" stroke-width="1.2"/>
<line x1="380.2" y1="216.5" x2="382.4" y2="220.0" stroke="#b0a0e0" stroke-width="1.2"/>
<line x1="430.7" y1="195.9" x2="432.9" y2="199.4" stroke="#b0a0e0" stroke-width="1.2"/>
<line x1="481.3" y1="175.3" x2="483.5" y2="178.8" stroke="#b0a0e0" stroke-width="1.2"/>
<line x1="531.8" y1="154.7" x2="534.0" y2="158.2" stroke="#b0a0e0" stroke-width="1.2"/>
<line x1="582.4" y1="134.1" x2="584.6" y2="137.6" stroke="#b0a0e0" stroke-width="1.2"/>
<line x1="632.9" y1="113.5" x2="635.1" y2="117.0" stroke="#b0a0e0" stroke-width="1.2"/>
<line x1="683.5" y1="92.9" x2="685.7" y2="96.4" stroke="#b0a0e0" stroke-width="1.2"/>
<line x1="734.0" y1="72.3" x2="736.2" y2="75.8" stroke="#b0a0e0" stroke-width="1.2"/>
<line x1="253.9" y1="397.0" x2="253.9" y2="287.0" stroke="#5f7d33" stroke-width="0.55"/>
<line x1="256.0" y1="397.0" x2="256.0" y2="287.0" stroke="#5f7d33" stroke-width="0.55"/>
<line x1="258.1" y1="397.0" x2="258.1" y2="287.0" stroke="#5f7d33" stroke-width="0.55"/>
<line x1="254.0" y1="397.0" x2="258.0" y2="397.0" stroke="#9ac83a" stroke-width="1.4"/>
<line x1="255.0" y1="287.0" x2="257.0" y2="289.0" stroke="#a8d040" stroke-width="1.2"/>
<line x1="319.9" y1="428.6" x2="319.9" y2="318.6" stroke="#5f7d33" stroke-width="0.55"/>
<line x1="322.0" y1="428.6" x2="322.0" y2="318.6" stroke="#5f7d33" stroke-width="0.55"/>
<line x1="324.1" y1="428.6" x2="324.1" y2="318.6" stroke="#5f7d33" stroke-width="0.55"/>
<line x1="320.0" y1="428.6" x2="324.0" y2="428.6" stroke="#9ac83a" stroke-width="1.4"/>
<line x1="321.0" y1="318.6" x2="323.0" y2="320.6" stroke="#a8d040" stroke-width="1.2"/>
<line x1="257.9" y1="294.4" x2="322.0" y2="325.1" stroke="#7a10e0" stroke-width="2.0"/>
<line x1="210.7" y1="301.3" x2="256.0" y2="323.0" stroke="#18b060" stroke-width="1.7"/>
<line x1="322.0" y1="354.6" x2="365.8" y2="375.5" stroke="#18b060" stroke-width="1.7"/>
<line x1="256.0" y1="312.0" x2="322.0" y2="343.6" stroke="#27706d" stroke-width="0.8"/>
<line x1="256.0" y1="314.0" x2="322.0" y2="345.6" stroke="#27706d" stroke-width="0.8"/>
<rect x="257.2" y="309.9" width="1.6" height="3" fill="#4a90e0"/>
<rect x="257.2" y="308.9" width="1.6" height="1.2" fill="#e04040"/>
<rect x="273.0" y="317.5" width="1.6" height="3" fill="#4a90e0"/>
<rect x="273.0" y="316.5" width="1.6" height="1.2" fill="#e04040"/>
<rect x="303.4" y="332.0" width="1.6" height="3" fill="#4a90e0"/>
<rect x="303.4" y="331.0" width="1.6" height="1.2" fill="#e04040"/>
<rect x="319.2" y="339.6" width="1.6" height="3" fill="#4a90e0"/>
<rect x="319.2" y="338.6" width="1.6" height="1.2" fill="#e04040"/>
<rect x="320.8" y="317.6" width="2.4" height="6" fill="#ff1a1a"/>
<line x1="506.7" y1="294.0" x2="506.7" y2="184.0" stroke="#5f7d33" stroke-width="0.55"/>
<line x1="508.8" y1="294.0" x2="508.8" y2="184.0" stroke="#5f7d33" stroke-width="0.55"/>
<line x1="510.9" y1="294.0" x2="510.9" y2="184.0" stroke="#5f7d33" stroke-width="0.55"/>
<line x1="506.8" y1="294.0" x2="510.8" y2="294.0" stroke="#9ac83a" stroke-width="1.4"/>
<line x1="507.8" y1="184.0" x2="509.8" y2="186.0" stroke="#a8d040" stroke-width="1.2"/>
<line x1="572.6" y1="325.6" x2="572.6" y2="215.6" stroke="#5f7d33" stroke-width="0.55"/>
<line x1="574.7" y1="325.6" x2="574.7" y2="215.6" stroke="#5f7d33" stroke-width="0.55"/>
<line x1="576.8" y1="325.6" x2="576.8" y2="215.6" stroke="#5f7d33" stroke-width="0.55"/>
<line x1="572.7" y1="325.6" x2="576.7" y2="325.6" stroke="#9ac83a" stroke-width="1.4"/>
<line x1="573.7" y1="215.6" x2="575.7" y2="217.6" stroke="#a8d040" stroke-width="1.2"/>
<line x1="510.7" y1="191.4" x2="574.7" y2="222.1" stroke="#7a10e0" stroke-width="2.0"/>
<line x1="463.5" y1="198.3" x2="508.8" y2="220.0" stroke="#18b060" stroke-width="1.7"/>
<line x1="574.7" y1="251.6" x2="618.5" y2="272.5" stroke="#18b060" stroke-width="1.7"/>
<line x1="523.9" y1="227.2" x2="574.7" y2="251.6" stroke="#7a10e0" stroke-width="1.8"/>
<rect x="573.5" y="214.6" width="2.4" height="6" fill="#ff1a1a"/>
<line x1="759.4" y1="191.0" x2="759.4" y2="81.0" stroke="#5f7d33" stroke-width="0.55"/>
<line x1="761.5" y1="191.0" x2="761.5" y2="81.0" stroke="#5f7d33" stroke-width="0.55"/>
<line x1="763.6" y1="191.0" x2="763.6" y2="81.0" stroke="#5f7d33" stroke-width="0.55"/>
<line x1="759.5" y1="191.0" x2="763.5" y2="191.0" stroke="#9ac83a" stroke-width="1.4"/>
<line x1="760.5" y1="81.0" x2="762.5" y2="83.0" stroke="#a8d040" stroke-width="1.2"/>
<line x1="825.4" y1="222.6" x2="825.4" y2="112.6" stroke="#5f7d33" stroke-width="0.55"/>
<line x1="827.5" y1="222.6" x2="827.5" y2="112.6" stroke="#5f7d33" stroke-width="0.55"/>
<line x1="829.6" y1="222.6" x2="829.6" y2="112.6" stroke="#5f7d33" stroke-width="0.55"/>
<line x1="825.5" y1="222.6" x2="829.5" y2="222.6" stroke="#9ac83a" stroke-width="1.4"/>
<line x1="826.5" y1="112.6" x2="828.5" y2="114.6" stroke="#a8d040" stroke-width="1.2"/>
<line x1="763.4" y1="88.4" x2="827.5" y2="119.1" stroke="#7a10e0" stroke-width="2.0"/>
<line x1="716.2" y1="95.3" x2="761.5" y2="117.0" stroke="#18b060" stroke-width="1.7"/>
<line x1="827.5" y1="148.6" x2="871.3" y2="169.5" stroke="#18b060" stroke-width="1.7"/>
<line x1="761.5" y1="106.0" x2="827.5" y2="137.6" stroke="#27706d" stroke-width="0.8"/>
<line x1="761.5" y1="108.0" x2="827.5" y2="139.6" stroke="#27706d" stroke-width="0.8"/>
<rect x="762.7" y="103.9" width="1.6" height="3" fill="#4a90e0"/>
<rect x="762.7" y="102.9" width="1.6" height="1.2" fill="#e04040"/>
<rect x="778.5" y="111.5" width="1.6" height="3" fill="#4a90e0"/>
<rect x="778.5" y="110.5" width="1.6" height="1.2" fill="#e04040"/>
<rect x="808.9" y="126.0" width="1.6" height="3" fill="#4a90e0"/>
<rect x="808.9" y="125.0" width="1.6" height="1.2" fill="#e04040"/>
<rect x="824.7" y="133.6" width="1.6" height="3" fill="#4a90e0"/>
<rect x="824.7" y="132.6" width="1.6" height="1.2" fill="#e04040"/>
<rect x="760.3" y="80.0" width="2.4" height="6" fill="#ff1a1a"/>
<line x1="195.4" y1="338.9" x2="254.1" y2="367.1" stroke="#6660d0" stroke-width="2.0"/>
<line x1="324.3" y1="400.7" x2="381.1" y2="427.9" stroke="#6660d0" stroke-width="2.2"/>
<line x1="448.1" y1="235.9" x2="506.9" y2="264.1" stroke="#6660d0" stroke-width="2.0"/>
<line x1="577.0" y1="297.7" x2="633.9" y2="324.9" stroke="#6660d0" stroke-width="2.2"/>
<line x1="700.9" y1="132.9" x2="759.6" y2="161.1" stroke="#6660d0" stroke-width="2.0"/>
<line x1="829.8" y1="194.7" x2="886.6" y2="221.9" stroke="#6660d0" stroke-width="2.2"/>
<polyline points="242.5,340.5 242.5,389.8 338.3,350.7 338.3,268.9 251.5,304.3" fill="none" stroke="#d8d8d8" stroke-width="0.8"/>
<line x1="345.3" y1="266.0" x2="345.7" y2="333.0" stroke="#2a9a3a" stroke-width="1.5"/>
<line x1="200.1" y1="320.2" x2="226.7" y2="285.9" stroke="#6660d0" stroke-width="1.8"/>
<polyline points="747.6,185.4 842.8,146.6 842.8,61.8 747.6,100.6 747.6,185.4" fill="none" stroke="#d8d8d8" stroke-width="0.8"/>
<line x1="446.2" y1="263.0" x2="635.8" y2="353.8" stroke="#2fa39d" stroke-width="2.8"/>
<line x1="446.2" y1="263.0" x2="635.8" y2="353.8" stroke="#14504e" stroke-width="2.0" stroke-dasharray="0.9 1.5" stroke-linecap="butt"/>
<line x1="193.5" y1="367.0" x2="256.0" y2="397.0" stroke="#2c8e89" stroke-width="2.6"/>
<line x1="193.5" y1="367.0" x2="256.0" y2="397.0" stroke="#0f3a38" stroke-width="0.9"/>
<line x1="322.0" y1="428.6" x2="383.0" y2="457.8" stroke="#2c8e89" stroke-width="2.6"/>
<line x1="322.0" y1="428.6" x2="383.0" y2="457.8" stroke="#0f3a38" stroke-width="0.9"/>
<line x1="699.0" y1="161.0" x2="761.5" y2="191.0" stroke="#2c8e89" stroke-width="2.6"/>
<line x1="699.0" y1="161.0" x2="761.5" y2="191.0" stroke="#0f3a38" stroke-width="0.9"/>
<line x1="827.5" y1="222.6" x2="888.5" y2="251.8" stroke="#2c8e89" stroke-width="2.6"/>
<line x1="827.5" y1="222.6" x2="888.5" y2="251.8" stroke="#0f3a38" stroke-width="0.9"/>
<line x1="533.0" y1="264.0" x2="533.0" y2="307.0" stroke="#1010e8" stroke-width="1.8"/>
<line x1="550.0" y1="270.0" x2="550.0" y2="315.0" stroke="#1010e8" stroke-width="1.8"/>
<line x1="511.0" y1="255.0" x2="570.0" y2="282.0" stroke="#1010e8" stroke-width="1.9"/>
<line x1="536.0" y1="266.5" x2="558.0" y2="277.0" stroke="#1010e8" stroke-width="1.1"/>
<line x1="530.5" y1="307.3" x2="535.0" y2="307.3" stroke="#f0f0f0" stroke-width="1"/>
<line x1="547.5" y1="315.0" x2="552.5" y2="314.3" stroke="#f0f0f0" stroke-width="1"/>
<line x1="231.0" y1="285.0" x2="258.0" y2="322.0" stroke="#2c9c2c" stroke-width="0.7"/>
<line x1="298.0" y1="282.0" x2="392.0" y2="311.0" stroke="#2c9c2c" stroke-width="0.7"/>
<line x1="392.0" y1="311.0" x2="398.0" y2="322.0" stroke="#2c9c2c" stroke-width="0.7"/>
<line x1="398.0" y1="322.0" x2="383.0" y2="414.0" stroke="#2c9c2c" stroke-width="0.7"/>
<line x1="374.0" y1="338.0" x2="434.0" y2="436.0" stroke="#2c9c2c" stroke-width="0.7"/>
<line x1="281.0" y1="262.0" x2="290.0" y2="300.0" stroke="#2c9c2c" stroke-width="0.7"/>
<line x1="196.0" y1="348.0" x2="300.0" y2="283.0" stroke="#2c9c2c" stroke-width="0.7"/>
<line x1="205.0" y1="300.0" x2="330.0" y2="268.0" stroke="#2c9c2c" stroke-width="0.7"/>
<line x1="330.0" y1="268.0" x2="346.0" y2="262.0" stroke="#2c9c2c" stroke-width="0.7"/>
<line x1="258.0" y1="322.0" x2="196.0" y2="350.0" stroke="#2c9c2c" stroke-width="0.7"/>
<line x1="345.0" y1="265.0" x2="346.0" y2="330.0" stroke="#2c9c2c" stroke-width="0.7"/>
<line x1="346.0" y1="330.0" x2="414.0" y2="350.0" stroke="#2c9c2c" stroke-width="0.7"/>
<line x1="383.0" y1="414.0" x2="434.0" y2="436.0" stroke="#2c9c2c" stroke-width="0.7"/>
<line x1="414.0" y1="350.0" x2="434.0" y2="437.0" stroke="#2c9c2c" stroke-width="0.7"/>
<line x1="378.8" y1="337.5" x2="366.3" y2="376.3" stroke="#d8d8d8" stroke-width="1.1"/>
<line x1="383.8" y1="453.5" x2="407.8" y2="419.5" stroke="#d8d8d8" stroke-width="1.1"/>
<line x1="219.0" y1="329.0" x2="247.0" y2="343.0" stroke="#d8d8d8" stroke-width="1.0"/>
<line x1="182.0" y1="444.0" x2="183.0" y2="399.0" stroke="#e6e6e6" stroke-width="0.9"/>
<line x1="182.0" y1="444.0" x2="211.0" y2="456.0" stroke="#e6e6e6" stroke-width="0.9"/>
<line x1="182.0" y1="444.0" x2="147.0" y2="458.0" stroke="#e6e6e6" stroke-width="0.9"/>
<path d="M183 398 l-2.4 8 l2.4 2.2 l2.6 -2.2 z" fill="none" stroke="#e6e6e6" stroke-width="0.8"/>
<path d="M216 458 l-7.5 -5 l-2 3.6 l4 3 z" fill="none" stroke="#e6e6e6" stroke-width="0.8"/>
<path d="M179.5 441 l4.5 -1 l1 5.5 l-4 1.8 z" fill="none" stroke="#e6e6e6" stroke-width="0.8"/>
<text x="179.3" y="391.5" fill="#d0d0d0" font-family="Liberation Sans, sans-serif" font-size="14" font-weight="400" stroke="#050505" stroke-width="0.7">Y</text>
<text x="222.3" y="470.3" fill="#d0d0d0" font-family="Liberation Sans, sans-serif" font-size="14" font-weight="400" stroke="#050505" stroke-width="0.7">X</text>
<text x="130.3" y="468.3" fill="#d0d0d0" font-family="Liberation Sans, sans-serif" font-size="14" font-weight="400" stroke="#050505" stroke-width="0.7">Z</text>
<line x1="772.0" y1="365.0" x2="772.0" y2="413.0" stroke="#c8c8c8" stroke-width="0.8"/>
<line x1="749.0" y1="378.0" x2="795.0" y2="400.0" stroke="#c8c8c8" stroke-width="0.8"/>
<rect x="770.6" y="387.6" width="2.8" height="2.8" fill="none" stroke="#c8c8c8" stroke-width="0.6"/>
<line x1="908.0" y1="458.0" x2="908.0" y2="478.0" stroke="#f0f0f0" stroke-width="0.9"/>
<line x1="908.0" y1="450.0" x2="908.0" y2="457.0" stroke="#e8e8e8" stroke-width="0.8" stroke-dasharray="1.4 1.6"/>
<path d="M906 462.8 l-4.4 3.7 l4.4 3.7 z M910 462.8 l4.4 3.7 l-4.4 3.7 z" fill="#050505" stroke="#e4e4e4" stroke-width="0.75"/>
</svg></div>
<div id="vscroll" class="a"></div>
<svg class="a" style="left:972px;top:61px" width="10" height="418" viewBox="0 0 10 418"><path d="M3 6.3l2-2.4 2 2.4z" fill="#333"/><path d="M3 409.5l2 2.4 2-2.4z" fill="#555"/><rect x=".8" y="361.5" width="8.4" height="11.5" fill="#e6e6e6" stroke="#b0b0b0" stroke-width=".7" rx="1"/><path d="M3 365.5h4M3 367.3h4M3 369.1h4" stroke="#888" stroke-width=".6"/></svg>
<div id="rtb" class="a"></div>
<svg class="a" style="left:0;top:0" width="1000" height="260" viewBox="0 0 1000 260"><ellipse cx="990.8" cy="73.4" rx="4" ry="2.6" fill="#fff" stroke="#222" stroke-width=".7"/><path d="M989.8 71.4 l2 -2 l2.5 1" stroke="#c8a020" stroke-width="1.2" fill="none"/><ellipse cx="990.8" cy="88.5" rx="4" ry="2.6" fill="#2a8a2a" stroke="#121" stroke-width=".6"/><path d="M987.3 87.5 l-1.5 -1.5 M994.3 87.5 l1.8 -1.8" stroke="#121" stroke-width="1" fill="none"/><rect x="989.6" y="84.9" width="2.4" height="1.2" fill="#121"/><rect x="987.3" y="101.5" width="7" height="4.5" fill="#fff" stroke="#111" stroke-width=".9"/><path d="M987.3 100.8 l6.5 -3" stroke="#111" stroke-width="1.6" fill="none"/><path d="M988.8 110.5 l6 7" stroke="#222" stroke-width="1.1" fill="none"/><circle cx="988.5" cy="111.9" r="1.6" fill="#e8d020" stroke="#654" stroke-width=".4"/><path d="M990.8 114.5 l2.5 2 l-1 2.5" stroke="#222" stroke-width=".9" fill="none"/><circle cx="990.8" cy="126.7" r="3.8" fill="#123" stroke="#111" stroke-width=".5"/><circle cx="990.4" cy="126.4" r="2" fill="#2a9a2a"/><path d="M986.8 128.7 l3 2" stroke="#a22" stroke-width="1" fill="none"/><rect x="988.3" y="135.1" width="6.5" height="6.5" fill="#fff" stroke="#222" stroke-width=".8"/><circle cx="989.3" cy="139.1" r="2.5" fill="#1a6a2a" stroke="#111" stroke-width=".5"/><path d="M986.3 140.6 l3 2" stroke="#a22" stroke-width="1" fill="none"/><ellipse cx="990.8" cy="152.0" rx="4" ry="2.5" fill="#1a6a2a" stroke="#121" stroke-width=".6"/><path d="M987.3 148.3 h7" stroke="#c22" stroke-width="1.3" fill="none" stroke-dasharray="1.5 1"/><rect x="986.3" y="162.8" width="9" height="7" fill="#7ac0e8" stroke="#888" stroke-width=".4"/><rect x="986.3" y="166.8" width="9" height="3" fill="#4a9a3a"/><rect x="989.8" y="164.8" width="3" height="1.6" fill="#f0e8c0"/><path d="M986.8 180.6 q1.5 -2 3 0 t3 0 t2.5 0" stroke="#888" stroke-width=".8" fill="none"/><path d="M986.8 194.8 l3 -6 l3 6 z" fill="#2a9a2a" stroke="#131" stroke-width=".4"/><circle cx="992.8" cy="188.8" r="2.2" fill="#3aba3a" stroke="#131" stroke-width=".4"/><path d="M992.8 190.8 v4" stroke="#432" stroke-width=".9"/><path d="M986.8 207.0 l3 -6 l3 6 z" fill="#2a9a2a" stroke="#131" stroke-width=".4"/><path d="M990.8 204.0 l4 -5" stroke="#543" stroke-width="1.3"/><path d="M994.0 200.0 l1.2 -1.4" stroke="#e8c020" stroke-width="1.4"/><path d="M986.3 219.3 l3 -6 l3 6 z" fill="#2a9a2a" stroke="#131" stroke-width=".4"/><rect x="990.6" y="212.3" width="4.5" height="6" fill="#889" stroke="#223" stroke-width=".5"/><path d="M991.3 214.3 h3 M991.3 216.3 h3" stroke="#223" stroke-width=".6"/><path d="M987.3 226.6 h6 l-2 2.2 l2.5 2.8 l-3.5 -1.6 l-3 2 z" fill="#1a5a2a" stroke="#111" stroke-width=".5"/><path d="M992.3 231.1 l2 2" stroke="#111" stroke-width="1"/><ellipse cx="990.8" cy="241.8" rx="4" ry="3.2" fill="#111"/><rect x="988.3" y="237.2" width="5" height="2" fill="#222"/><circle cx="989.6" cy="241.8" r="1.1" fill="#ddd"/><circle cx="992.4" cy="241.8" r="1.1" fill="#ddd"/><path d="M985 63.5 h12" stroke="#c8c8c8" stroke-width=".8"/><path d="M985 79.5 h12" stroke="#c8c8c8" stroke-width=".8"/><path d="M985 95 h12" stroke="#c8c8c8" stroke-width=".8"/><path d="M985 158.5 h12" stroke="#c8c8c8" stroke-width=".8"/><path d="M985 174 h12" stroke="#c8c8c8" stroke-width=".8"/><path d="M985 222 h12" stroke="#c8c8c8" stroke-width=".8"/></svg>
<div id="tabrow" class="a"></div>
<div class="a" style="left:123.6px;top:478.8px;width:9.5px;height:9.4px;background:#f6f6f6;border:1px solid #d0d0d0"></div>
<div class="a" style="left:133px;top:478.8px;width:9.5px;height:9.4px;background:#f6f6f6;border:1px solid #d0d0d0"></div>
<div class="a" style="left:142.4px;top:478.8px;width:9.5px;height:9.4px;background:#f6f6f6;border:1px solid #d0d0d0"></div>
<div class="a" style="left:151.8px;top:478.8px;width:9.5px;height:9.4px;background:#f6f6f6;border:1px solid #d0d0d0"></div>
<svg class="a" style="left:123px;top:478px" width="120" height="11" viewBox="123 478 120 11"><path d="M126.2 481.2v4.6M130.3 481.2l-3 2.3 3 2.3z" fill="#111" stroke="#111" stroke-width=".7"/><path d="M139.3 481.2l-3 2.3 3 2.3z" fill="#111"/><path d="M145.8 481.2l3 2.3-3 2.3z" fill="#111"/><path d="M154.4 481.2l3 2.3-3 2.3z M158.4 481.2v4.6" fill="#111" stroke="#111" stroke-width=".7"/><path d="M163.5 478l3.2 10h26.5l3-10z" fill="#050505"/><path d="M196.4 478l-3 10h35.6l3.2-10" fill="#fff" stroke="#333" stroke-width=".7"/></svg>
<div class="t" style="left:168.6px;top:479.4px;font-size:7.6px;font-weight:700;color:#fff;letter-spacing:-0.1px">Model</div>
<div class="t" style="left:200.6px;top:479.6px;font-size:7.4px;color:#222;letter-spacing:-0.05px">Layout1</div>
<div class="a" style="left:683px;top:478.5px;width:288.5px;height:10px;background:#f3f3f3;border-top:1px solid #e2e2e2"></div>
<div class="sbtn" style="left:683.5px;top:479px;width:14px;height:9.2px"></div>
<div class="sbtn" style="left:957px;top:479px;width:14px;height:9.2px"></div>
<div class="sbtn" style="left:850.5px;top:479px;width:10.5px;height:9.2px"></div>
<svg class="a" style="left:683px;top:478px" width="290" height="11" viewBox="683 478 290 11"><path d="M692.3 481.2l-3 2.4 3 2.4z M962.6 481.2l3 2.4-3 2.4z" fill="#111"/></svg>
<div id="cmd" class="a"></div>
<div class="a" style="left:0;top:490.5px;width:1000px;height:1px;background:#c8c8c8"></div>
<div class="a" style="left:0;top:492.5px;width:1000px;height:1px;background:#b8b8b8"></div>
<div id="cmdtxt" class="a"></div><div id="cmdln" class="a"></div>
<div class="mono" style="top:495.3px">shortcut-menu.</div>
<div class="mono" style="top:504.4px">Regenerating model.</div>
<div class="mono" style="top:513.2px">Command:</div>
<div class="a" style="left:984px;top:494px;width:11px;height:17.5px;background:#fbfbfb;border-left:1px solid #e8e8e8;border-top:1px solid #9a9a9a"></div>
<div class="a" style="left:961px;top:494px;width:23px;height:17.5px;background:#fff;border-top:1px solid #9a9a9a"></div>
<div class="sbtn" style="left:940.5px;top:512.2px;width:10.5px;height:9.4px"></div>
<div class="sbtn" style="left:951.5px;top:512.2px;width:10px;height:9.4px"></div>
<div class="sbtn" style="left:972.5px;top:512.2px;width:10.5px;height:9.4px"></div>
<svg class="a" style="left:930px;top:492px" width="70" height="32" viewBox="930 492 70 32"><path d="M947.3 514.7l-2.8 2.2 2.8 2.2z M976.4 514.7l2.8 2.2-2.8 2.2z" fill="#111"/><path d="M987.8 499l1.8-2 1.8 2z M987.8 505l1.8 2 1.8-2z" fill="#333"/></svg>
<div id="status" class="a"></div>
<div class="sf" style="left:6.5px;width:249px"></div>
<div class="sf" style="left:256px;width:143px"></div>
<div class="st" style="left:9.2px">Target: Б12Х30__3Д</div>
<div class="st" style="left:72.6px">| END,MID,CEN,NOD,INT,EXT</div>
<div class="st" style="left:168.3px">|Target: Д8Х20Х8__ЭСКИЗ</div>
<div class="st" style="left:251.5px">3</div>
<div class="st" style="left:258.5px">30121.40, 8918.16 , 0.00</div>
<div class="sb" style="left:402px;width:21.5px">SNAP</div>
<div class="sb" style="left:424.5px;width:20px">GRID</div>
<div class="sb on" style="left:445.5px;width:27.5px">ORTHO</div>
<div class="sb" style="left:473.5px;width:26px">POLAR</div>
<div class="sb on" style="left:500.5px;width:27.5px">OSNAP</div>
<div class="sb" style="left:528.5px;width:31px">OTRACK</div>
<div class="sb" style="left:560.5px;width:17px">LWT</div>
<div class="sb on" style="left:578.5px;width:27.5px">MODEL</div>
<div id="bottomedge" class="a"></div>
<div class="a" style="left:999px;top:17px;width:1px;height:519px;background:#a8a890"></div>
</body></html>
